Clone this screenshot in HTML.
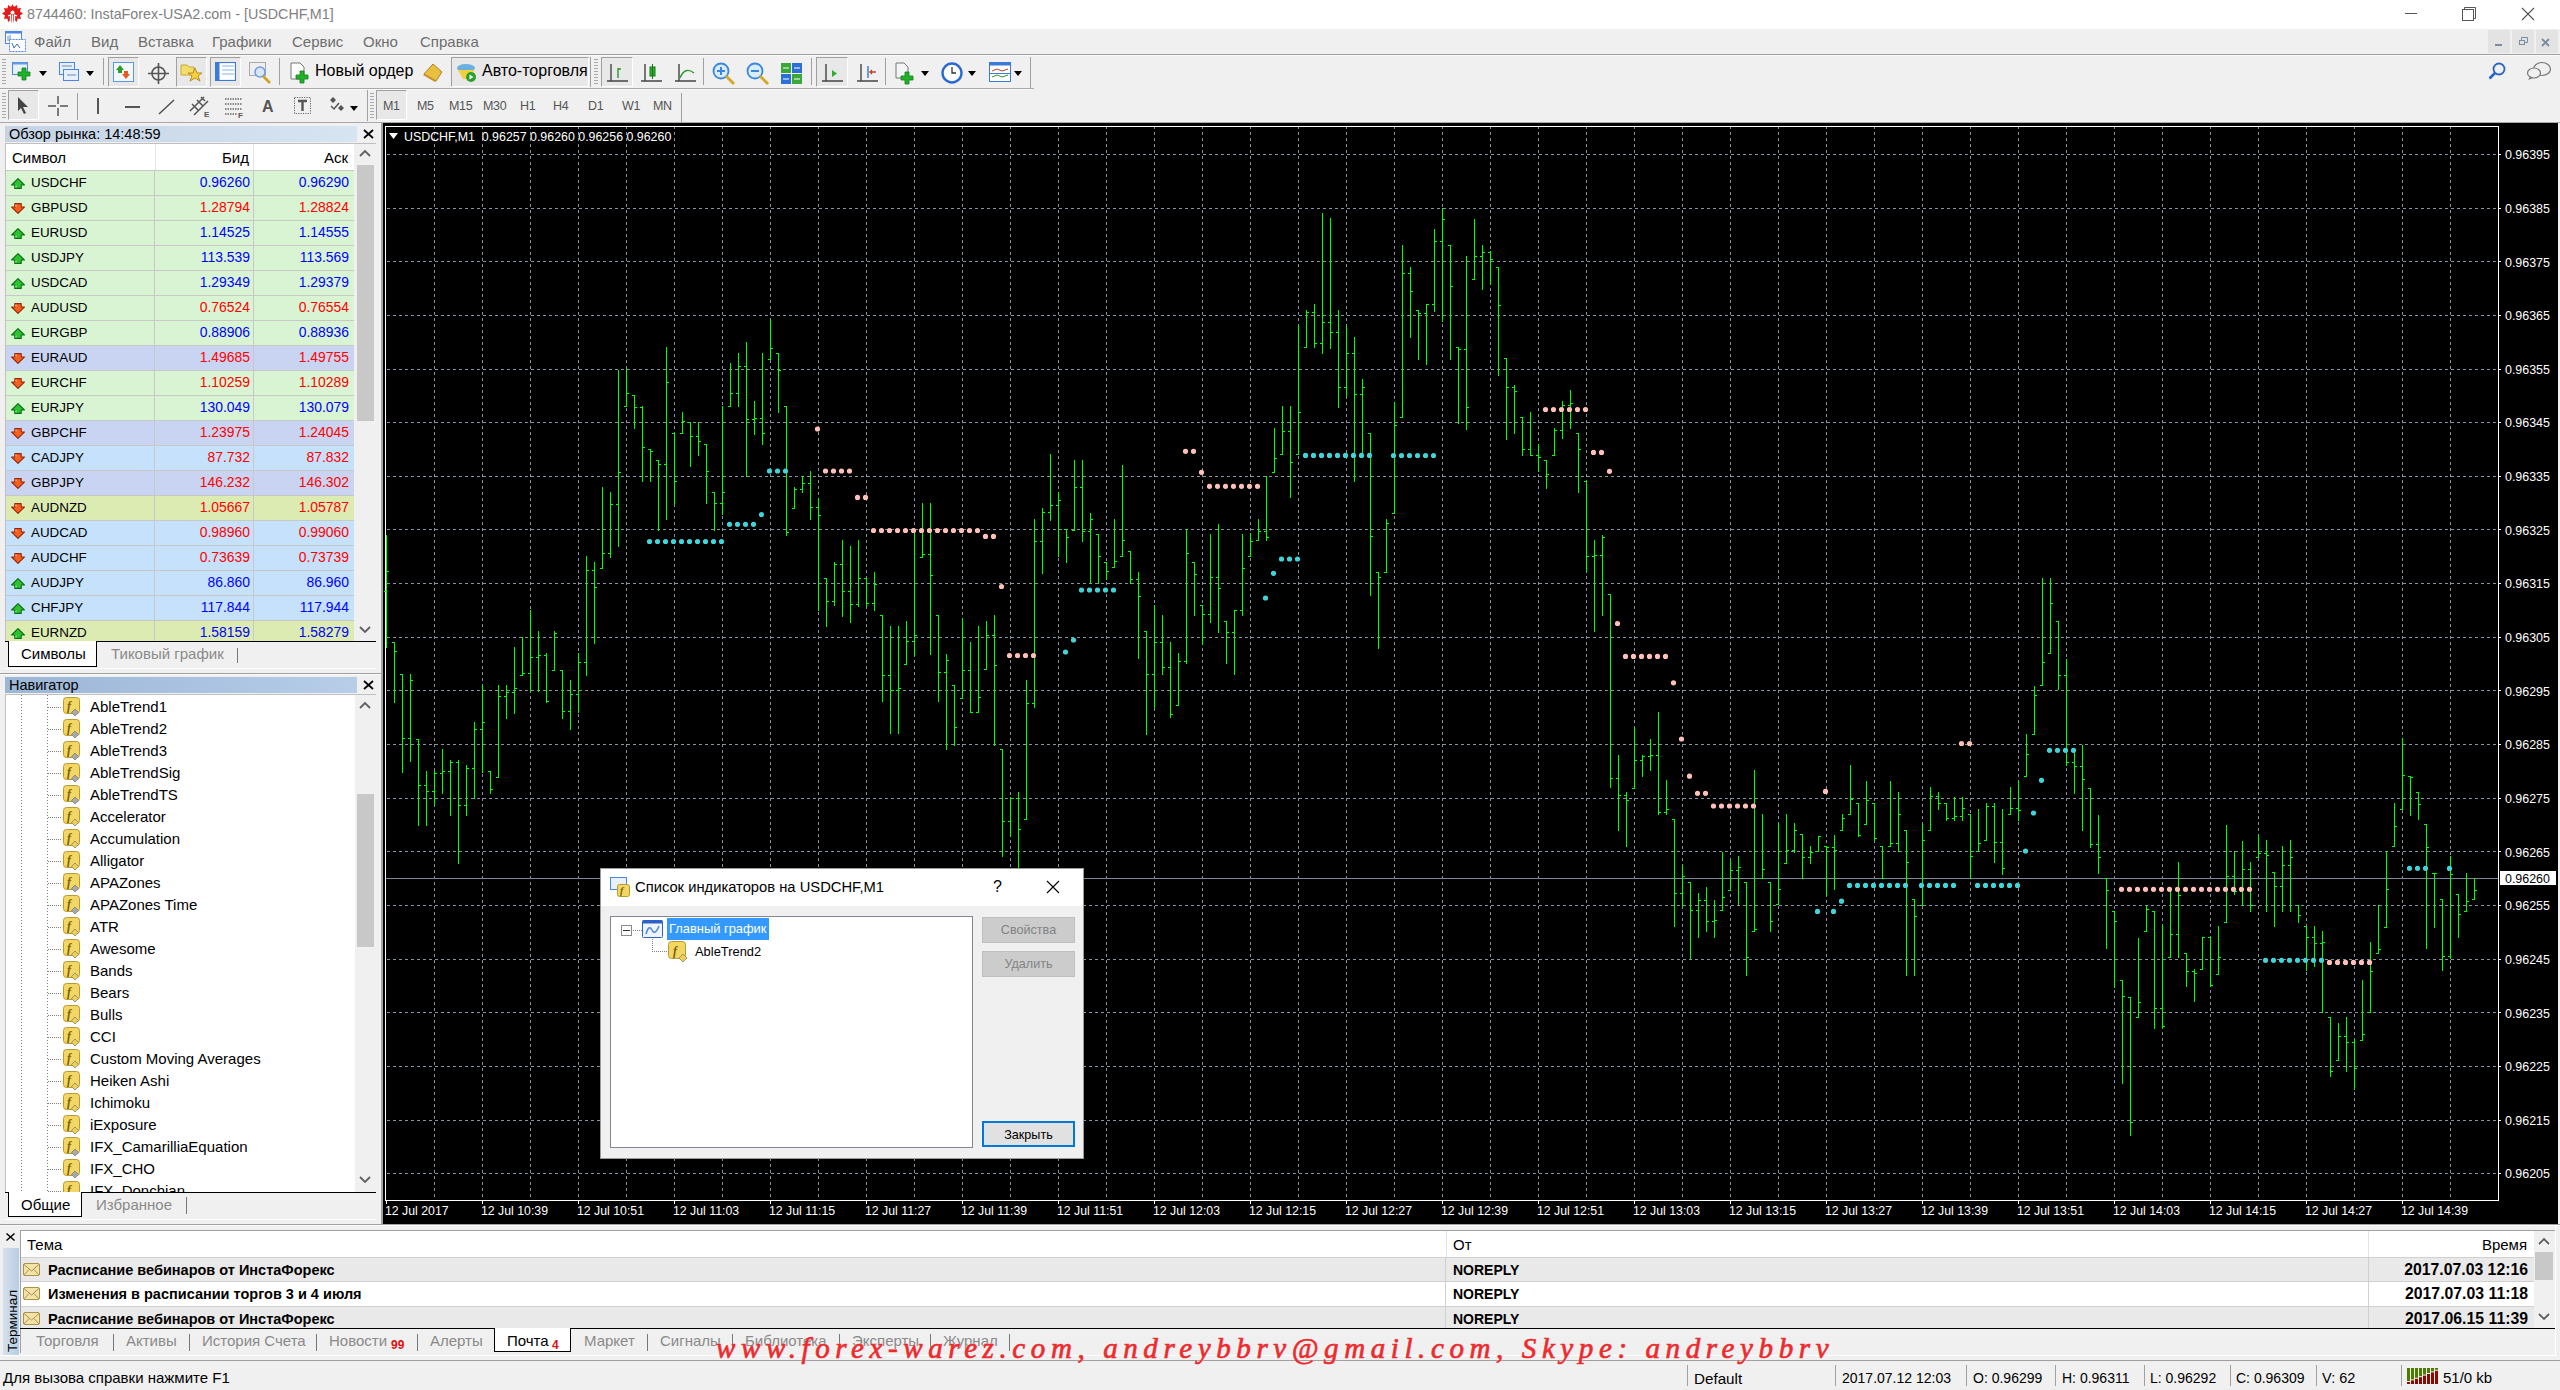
<!DOCTYPE html>
<html><head><meta charset="utf-8"><style>
html,body{margin:0;padding:0;width:2560px;height:1390px;overflow:hidden;background:#f0f0f0;font-family:"Liberation Sans", sans-serif;}
.t{position:absolute;white-space:nowrap;line-height:1;}
div{box-sizing:border-box;}
</style></head><body>
<div style="position:absolute;left:0px;top:0px;width:2560px;height:29px;background:#fff;"></div><svg style="position:absolute;left:2px;top:4px" width="21" height="21" viewBox="0 0 21 21">
<g fill="#e31b1b"><circle cx="10.5" cy="9.5" r="7"/>
<polygon points="10.5,0 12,3 15,1 15.5,4.5 19,4 18,7.5 21,9.5 18,11.5 19,15 15.5,14.5 15,18 12,16 10.5,21 9,16 6,18 5.5,14.5 2,15 3,11.5 0,9.5 3,7.5 2,4 5.5,4.5 6,1 9,3"/></g>
<circle cx="10.5" cy="8.5" r="2" fill="#fff"/><path d="M10.5 11 V21 M6 12 L8.5 11 V17 M15 12 L12.5 11 V17" stroke="#fff" stroke-width="1.3" fill="none"/>
</svg><div class="t" style="left:27px;top:7px;font-size:14.3px;color:#808080;">8744460: InstaForex-USA2.com - [USDCHF,M1]</div><div style="position:absolute;left:2405px;top:13px;width:12px;height:1px;background:#555;"></div><svg style="position:absolute;left:2462px;top:7px" width="14" height="14"><rect x="0.5" y="2.5" width="11" height="11" fill="none" stroke="#555"/><path d="M2.5 2.5 V0.5 H13.5 V11.5 H11.5" fill="none" stroke="#555"/></svg><svg style="position:absolute;left:2521px;top:7px" width="14" height="14"><path d="M1 1 L13 13 M13 1 L1 13" stroke="#555" stroke-width="1.1"/></svg><div style="position:absolute;left:0px;top:29px;width:2560px;height:25px;background:#f0f0f0;"></div><svg style="position:absolute;left:5px;top:31px" width="21" height="21" viewBox="0 0 21 21">
<rect x="0.5" y="0.5" width="16" height="12" fill="#fff" stroke="#4a86e8"/><rect x="0.5" y="0.5" width="16" height="2" fill="#4a86e8"/>
<rect x="4.5" y="8.5" width="16" height="12" fill="#fff" stroke="#4a86e8" stroke-dasharray="2,1"/>
<path d="M7 12 L9 17 L12 13 L15 17" stroke="#3a6ed8" fill="none"/><path d="M3 5 V10 M5 4 V8" stroke="#5a8ad8"/></svg><div class="t" style="left:34px;top:34px;font-size:15px;color:#6d6d6d;">Файл</div><div class="t" style="left:91px;top:34px;font-size:15px;color:#6d6d6d;">Вид</div><div class="t" style="left:138px;top:34px;font-size:15px;color:#6d6d6d;">Вставка</div><div class="t" style="left:212px;top:34px;font-size:15px;color:#6d6d6d;">Графики</div><div class="t" style="left:292px;top:34px;font-size:15px;color:#6d6d6d;">Сервис</div><div class="t" style="left:363px;top:34px;font-size:15px;color:#6d6d6d;">Окно</div><div class="t" style="left:420px;top:34px;font-size:15px;color:#6d6d6d;">Справка</div><div style="position:absolute;left:2488px;top:30px;width:22px;height:23px;background:#e3e3e3;"></div><div style="position:absolute;left:2512px;top:30px;width:22px;height:23px;background:#e3e3e3;"></div><div style="position:absolute;left:2536px;top:30px;width:22px;height:23px;background:#e3e3e3;"></div><div style="position:absolute;left:2495px;top:44px;width:7px;height:2px;background:#7b8ba0;"></div><svg style="position:absolute;left:2519px;top:37px" width="9" height="9"><rect x="0.5" y="3.5" width="5" height="4" fill="none" stroke="#7b8ba0"/><path d="M2.5 3 V0.5 H8.5 V5.5 H6" fill="none" stroke="#7b8ba0"/></svg><svg style="position:absolute;left:2541px;top:38px" width="9" height="9"><path d="M1 1 L8 8 M8 1 L1 8" stroke="#7b8ba0" stroke-width="1.8"/></svg><div style="position:absolute;left:0px;top:54px;width:2560px;height:1px;background:#a0a0a0;"></div><div style="position:absolute;left:0px;top:55px;width:2560px;height:1px;background:#fafafa;"></div><div style="position:absolute;left:0px;top:88px;width:1034px;height:1px;background:#a9a9a9;"></div><div style="position:absolute;left:0px;top:89px;width:1031px;height:1px;background:#fafafa;"></div><div style="position:absolute;left:0px;top:122px;width:2560px;height:1px;background:#a9a9a9;"></div><div style="position:absolute;left:2px;top:59px;width:4px;height:27px;background:repeating-linear-gradient(#a8a8a8 0 1px,#f0f0f0 1px 3px);"></div><svg style="position:absolute;left:12px;top:62px" width="22" height="20" viewBox="0 0 22 20"><rect x="0.5" y="0.5" width="15" height="12" fill="#e8f0fa" stroke="#4a86e8"/><rect x="0.5" y="0.5" width="15" height="2" fill="#6a9ae8"/><path d="M10 6 H14 V10 H18 V14 H14 V18 H10 V14 H6 V10 H10Z" fill="#22b02a" stroke="#108018" stroke-width="0.8"/></svg><svg style="position:absolute;left:39px;top:71px" width="8" height="5"><path d="M0 0 H8 L4 5 Z" fill="#000"/></svg><svg style="position:absolute;left:59px;top:62px" width="22" height="20" viewBox="0 0 22 20"><rect x="0.5" y="0.5" width="15" height="12" fill="#e8f0fa" stroke="#4a86e8"/><rect x="4.5" y="7.5" width="15" height="11" fill="#e8f0fa" stroke="#4a86e8"/><path d="M3 4 H13 M8 13 H17" stroke="#6a8ab8"/></svg><svg style="position:absolute;left:86px;top:71px" width="8" height="5"><path d="M0 0 H8 L4 5 Z" fill="#000"/></svg><div style="position:absolute;left:103px;top:58px;width:1px;height:27px;background:#a0a0a0;"></div><div style="position:absolute;left:108px;top:57px;width:31px;height:30px;border-top:1px solid #a0a0a0;border-left:1px solid #a0a0a0;border-right:1px solid #fff;border-bottom:1px solid #fff;background:#e8e8e8;"></div><svg style="position:absolute;left:113px;top:62px" width="21" height="20" viewBox="0 0 21 20"><rect x="0.5" y="0.5" width="20" height="19" fill="#f4f8fc" stroke="#5a96e8"/><path d="M7 3 L11 8 H9 V11 H5 V8 H3Z" fill="#2aa02a"/><path d="M13 17 L17 12 H15 V9 H11 V12 H9Z" fill="#e85a20"/></svg><svg style="position:absolute;left:148px;top:63px" width="21" height="21" viewBox="0 0 21 21"><circle cx="10.5" cy="10.5" r="6.5" fill="none" stroke="#555" stroke-width="1.6"/><path d="M10.5 0 V21 M0 10.5 H21" stroke="#555" stroke-width="1.6"/></svg><div style="position:absolute;left:176px;top:57px;width:31px;height:30px;border-top:1px solid #a0a0a0;border-left:1px solid #a0a0a0;border-right:1px solid #fff;border-bottom:1px solid #fff;background:#e8e8e8;"></div><svg style="position:absolute;left:180px;top:62px" width="24" height="20" viewBox="0 0 24 20"><path d="M1 3 H7 L9 5 H14 V13 H1Z" fill="#f4dc6a" stroke="#c8a838"/><path d="M15 6 L17 11 H22 L18 14 L20 19 L15 16 L10 19 L12 14 L8 11 H13Z" fill="#f4d040" stroke="#b89020"/></svg><div style="position:absolute;left:210px;top:57px;width:31px;height:30px;border-top:1px solid #a0a0a0;border-left:1px solid #a0a0a0;border-right:1px solid #fff;border-bottom:1px solid #fff;background:#e8e8e8;"></div><svg style="position:absolute;left:215px;top:62px" width="21" height="19" viewBox="0 0 21 19"><rect x="0.5" y="0.5" width="20" height="18" fill="#fff" stroke="#3a7ad8" stroke-width="1.2"/><rect x="0.5" y="0.5" width="4" height="18" fill="#3a7ad8"/><path d="M7 4 H19 M7 8 H19 M7 12 H19" stroke="#8ab0e8"/></svg><svg style="position:absolute;left:249px;top:62px" width="23" height="22" viewBox="0 0 23 22"><rect x="0.5" y="0.5" width="16" height="13" fill="#eee" stroke="#aaa"/><circle cx="11" cy="10" r="5" fill="#d8e8f8" stroke="#6a9ae8" stroke-width="1.5"/><path d="M14 14 L21 21" stroke="#d4a020" stroke-width="2.5"/></svg><div style="position:absolute;left:279px;top:58px;width:1px;height:27px;background:#a0a0a0;"></div><svg style="position:absolute;left:290px;top:62px" width="21" height="23" viewBox="0 0 21 23"><path d="M1 1 H10 L14 5 V17 H1Z" fill="#fff" stroke="#777"/><path d="M10 9 H14 V13 H18 V17 H14 V21 H10 V17 H6 V13 H10Z" fill="#22b02a" stroke="#108018" stroke-width="0.8"/></svg><div class="t" style="left:315px;top:63px;font-size:16px;color:#000;">Новый ордер</div><svg style="position:absolute;left:422px;top:62px" width="22" height="20" viewBox="0 0 22 20"><path d="M2 12 L11 2 L20 10 L14 19 Z" fill="#e8c040" stroke="#b08020"/><path d="M2 12 L14 19 L13 20 L1 13Z" fill="#c89028"/></svg><div style="position:absolute;left:451px;top:57px;width:138px;height:30px;border-top:1px solid #a0a0a0;border-left:1px solid #a0a0a0;border-right:1px solid #fff;border-bottom:1px solid #fff;background:#e8e8e8;"></div><svg style="position:absolute;left:455px;top:61px" width="22" height="22" viewBox="0 0 22 22"><ellipse cx="11" cy="7" rx="9" ry="4" fill="#6ab0e0"/><path d="M3 9 L8 18 H15 L19 9Z" fill="#f0d040"/><circle cx="16" cy="16" r="5" fill="#2aa02a"/><path d="M14.5 13.5 L18.5 16 L14.5 18.5Z" fill="#fff"/></svg><div class="t" style="left:482px;top:63px;font-size:16px;color:#000;">Авто-торговля</div><div style="position:absolute;left:590px;top:57px;width:1px;height:30px;background:#a0a0a0;"></div><div style="position:absolute;left:594px;top:59px;width:4px;height:27px;background:repeating-linear-gradient(#a8a8a8 0 1px,#f0f0f0 1px 3px);"></div><div style="position:absolute;left:601px;top:57px;width:32px;height:30px;border-top:1px solid #a0a0a0;border-left:1px solid #a0a0a0;border-right:1px solid #fff;border-bottom:1px solid #fff;background:#e8e8e8;"></div><svg style="position:absolute;left:607px;top:64px" width="22" height="19" viewBox="0 0 22 19"><path d="M4 0 V17 M0 17 H21" stroke="#444" stroke-width="1.4"/><path d="M11 14 V4 M11 5 H14" stroke="#2a9a2a" stroke-width="1.4"/></svg><svg style="position:absolute;left:641px;top:64px" width="22" height="19" viewBox="0 0 22 19"><path d="M4 0 V17 M0 17 H21" stroke="#444" stroke-width="1.4"/><rect x="9" y="3" width="5" height="9" fill="#2ab02a" stroke="#187818"/><path d="M11.5 0 V15" stroke="#187818"/></svg><svg style="position:absolute;left:675px;top:64px" width="22" height="19" viewBox="0 0 22 19"><path d="M4 0 V17 M0 17 H21" stroke="#444" stroke-width="1.4"/><path d="M5 14 Q10 2 19 9" stroke="#2a9a2a" fill="none" stroke-width="1.4"/></svg><div style="position:absolute;left:703px;top:58px;width:1px;height:27px;background:#a0a0a0;"></div><svg style="position:absolute;left:712px;top:62px" width="24" height="24" viewBox="0 0 24 24"><circle cx="9" cy="9" r="7.5" fill="#d8ecfc" stroke="#3a86e0" stroke-width="1.8"/><path d="M5 9 H13 M9 5 V13" stroke="#3a86e0" stroke-width="2"/><path d="M14 14 L22 22" stroke="#d4a828" stroke-width="3"/></svg><svg style="position:absolute;left:746px;top:62px" width="24" height="24" viewBox="0 0 24 24"><circle cx="9" cy="9" r="7.5" fill="#d8ecfc" stroke="#3a86e0" stroke-width="1.8"/><path d="M5 9 H13" stroke="#3a86e0" stroke-width="2"/><path d="M14 14 L22 22" stroke="#d4a828" stroke-width="3"/></svg><svg style="position:absolute;left:781px;top:63px" width="22" height="21" viewBox="0 0 22 21"><rect x="0" y="0" width="10" height="10" fill="#38a838"/><rect x="11" y="0" width="10" height="10" fill="#2a70d8"/><rect x="0" y="11" width="10" height="10" fill="#2a70d8"/><rect x="11" y="11" width="10" height="10" fill="#38a838"/><path d="M2 5 H8 M13 5 H19 M2 16 H8 M13 16 H19" stroke="#fff"/></svg><div style="position:absolute;left:811px;top:58px;width:1px;height:27px;background:#a0a0a0;"></div><div style="position:absolute;left:816px;top:57px;width:32px;height:30px;border-top:1px solid #a0a0a0;border-left:1px solid #a0a0a0;border-right:1px solid #fff;border-bottom:1px solid #fff;background:#e8e8e8;"></div><svg style="position:absolute;left:822px;top:64px" width="22" height="19" viewBox="0 0 22 19"><path d="M4 0 V17 M0 17 H21" stroke="#444" stroke-width="1.4"/><path d="M10 6 V13 L15 9.5Z" fill="#2ab02a"/></svg><svg style="position:absolute;left:857px;top:64px" width="22" height="19" viewBox="0 0 22 19"><path d="M4 0 V17 M0 17 H21" stroke="#444" stroke-width="1.4"/><path d="M11 2 V14" stroke="#2a7ad8" stroke-width="1.4"/><path d="M19 8 H13 M15 6 L13 8 L15 10" stroke="#d04020" stroke-width="1.4" fill="none"/></svg><div style="position:absolute;left:885px;top:58px;width:1px;height:27px;background:#a0a0a0;"></div><svg style="position:absolute;left:895px;top:62px" width="24" height="23" viewBox="0 0 24 23"><path d="M1 1 H9 L13 5 V16 H1Z" fill="#f4f4f4" stroke="#777"/><path d="M10 10 H14 V14 H18 V18 H14 V22 H10 V18 H6 V14 H10Z" fill="#22b02a" stroke="#108018" stroke-width="0.8"/></svg><svg style="position:absolute;left:921px;top:71px" width="8" height="5"><path d="M0 0 H8 L4 5 Z" fill="#000"/></svg><svg style="position:absolute;left:941px;top:62px" width="22" height="22" viewBox="0 0 22 22"><circle cx="11" cy="11" r="9.5" fill="#fff" stroke="#2a6ad0" stroke-width="2.4"/><path d="M11 5 V11 H15" stroke="#333" stroke-width="1.3" fill="none"/></svg><svg style="position:absolute;left:968px;top:71px" width="8" height="5"><path d="M0 0 H8 L4 5 Z" fill="#000"/></svg><svg style="position:absolute;left:989px;top:62px" width="22" height="20" viewBox="0 0 22 20"><rect x="0.5" y="0.5" width="21" height="19" fill="#fff" stroke="#3a7ad8"/><rect x="0.5" y="0.5" width="21" height="3" fill="#3a7ad8"/><path d="M3 9 L8 7 L13 9 L19 7" stroke="#c04020" fill="none"/><path d="M3 15 L8 13 L13 15 L19 13" stroke="#2a9a2a" fill="none"/><path d="M0 11.5 H22" stroke="#3a7ad8"/></svg><svg style="position:absolute;left:1014px;top:71px" width="8" height="5"><path d="M0 0 H8 L4 5 Z" fill="#000"/></svg><div style="position:absolute;left:1030px;top:57px;width:1px;height:31px;background:#a0a0a0;"></div><svg style="position:absolute;left:2488px;top:62px" width="18" height="18" viewBox="0 0 18 18"><circle cx="11" cy="7" r="5.5" fill="none" stroke="#2a62c8" stroke-width="1.8"/><path d="M7 11 L1.5 16.5" stroke="#2a62c8" stroke-width="2.6"/></svg><svg style="position:absolute;left:2524px;top:61px" width="28" height="20" viewBox="0 0 28 20"><ellipse cx="18" cy="8" rx="8.5" ry="6.5" fill="#f0f0f0" stroke="#777" stroke-width="1.2"/><ellipse cx="10" cy="12" rx="6.5" ry="5" fill="#f0f0f0" stroke="#777" stroke-width="1.2"/><path d="M6 16 L4 19 L9 17" fill="#777"/></svg><div style="position:absolute;left:2px;top:93px;width:4px;height:27px;background:repeating-linear-gradient(#a8a8a8 0 1px,#f0f0f0 1px 3px);"></div><div style="position:absolute;left:8px;top:90px;width:31px;height:30px;border-top:1px solid #a0a0a0;border-left:1px solid #a0a0a0;border-right:1px solid #fff;border-bottom:1px solid #fff;background:#e8e8e8;"></div><svg style="position:absolute;left:17px;top:97px" width="12" height="18" viewBox="0 0 12 18"><path d="M1 0 V14 L4 11 L7 17 L9 16 L6 10 H11Z" fill="#444"/></svg><svg style="position:absolute;left:48px;top:96px" width="20" height="20" viewBox="0 0 20 20"><path d="M10 0 V8 M10 12 V20 M0 10 H8 M12 10 H20" stroke="#555" stroke-width="1.5"/></svg><div style="position:absolute;left:77px;top:93px;width:1px;height:27px;background:#a0a0a0;"></div><div style="position:absolute;left:97px;top:98px;width:2px;height:16px;background:#555;"></div><div style="position:absolute;left:125px;top:106px;width:15px;height:2px;background:#555;"></div><svg style="position:absolute;left:158px;top:99px" width="17" height="16" viewBox="0 0 17 16"><path d="M1 15 L16 1" stroke="#555" stroke-width="1.6"/></svg><svg style="position:absolute;left:189px;top:96px" width="22" height="22" viewBox="0 0 22 22"><path d="M1 15 L15 1 M5 19 L19 5 M3 8 L9 14 M8 4 L14 10 M12 1 L16 5" stroke="#555" stroke-width="1.5"/><text x="15" y="21" font-size="8" font-weight="bold" fill="#555" font-family="Liberation Sans">E</text></svg><svg style="position:absolute;left:225px;top:97px" width="20" height="21" viewBox="0 0 20 21"><path d="M0 2 H17 M0 7 H17 M0 12 H17 M0 17 H12" stroke="#666" stroke-width="1.5" stroke-dasharray="1.5,1"/><text x="13" y="21" font-size="8" font-weight="bold" fill="#555" font-family="Liberation Sans">F</text></svg><div class="t" style="left:262px;top:99px;font-size:16px;font-weight:bold;color:#555;">A</div><svg style="position:absolute;left:294px;top:97px" width="17" height="17" viewBox="0 0 17 17"><rect x="0.5" y="0.5" width="16" height="16" fill="none" stroke="#666" stroke-dasharray="1.2,1.2"/><path d="M4 4 H13 M8.5 4 V14" stroke="#555" stroke-width="2.4"/></svg><svg style="position:absolute;left:327px;top:97px" width="20" height="17" viewBox="0 0 20 17"><path d="M3 3 L6 0 L9 3 L6 6Z M11 11 L14 8 L17 11 L14 14Z" fill="#555"/><path d="M4 9 L7 12 L12 6" stroke="#555" stroke-width="1.5" fill="none"/></svg><svg style="position:absolute;left:350px;top:106px" width="8" height="5"><path d="M0 0 H8 L4 5 Z" fill="#000"/></svg><div style="position:absolute;left:367px;top:90px;width:1px;height:31px;background:#a0a0a0;"></div><div style="position:absolute;left:370px;top:93px;width:4px;height:27px;background:repeating-linear-gradient(#a8a8a8 0 1px,#f0f0f0 1px 3px);"></div><div style="position:absolute;left:376px;top:90px;width:31px;height:30px;border-top:1px solid #a0a0a0;border-left:1px solid #a0a0a0;border-right:1px solid #fff;border-bottom:1px solid #fff;background:#e8e8e8;"></div><div class="t" style="left:383px;top:100px;font-size:12.5px;color:#555;letter-spacing:-0.3px;">M1</div><div class="t" style="left:417px;top:100px;font-size:12.5px;color:#555;letter-spacing:-0.3px;">M5</div><div class="t" style="left:449px;top:100px;font-size:12.5px;color:#555;letter-spacing:-0.3px;">M15</div><div class="t" style="left:483px;top:100px;font-size:12.5px;color:#555;letter-spacing:-0.3px;">M30</div><div class="t" style="left:520px;top:100px;font-size:12.5px;color:#555;letter-spacing:-0.3px;">H1</div><div class="t" style="left:553px;top:100px;font-size:12.5px;color:#555;letter-spacing:-0.3px;">H4</div><div class="t" style="left:588px;top:100px;font-size:12.5px;color:#555;letter-spacing:-0.3px;">D1</div><div class="t" style="left:622px;top:100px;font-size:12.5px;color:#555;letter-spacing:-0.3px;">W1</div><div class="t" style="left:653px;top:100px;font-size:12.5px;color:#555;letter-spacing:-0.3px;">MN</div><div style="position:absolute;left:681px;top:93px;width:1px;height:29px;background:#a0a0a0;"></div><div style="position:absolute;left:0px;top:123px;width:383px;height:1101px;background:#f0f0f0;"></div><div style="position:absolute;left:381px;top:123px;width:2px;height:1101px;background:#a0a0a0;"></div><div style="position:absolute;left:5px;top:126px;width:352px;height:16px;background:linear-gradient(90deg,#c5d3e5,#d7e4f2);"></div><div class="t" style="left:9px;top:127px;font-size:14.5px;color:#000;">Обзор рынка: 14:48:59</div><svg style="position:absolute;left:363px;top:129px" width="11" height="10"><path d="M1 1 L10 9 M10 1 L1 9" stroke="#000" stroke-width="1.7"/></svg><div style="position:absolute;left:5px;top:143px;width:371px;height:498px;background:#fff;border-top:1px solid #c0c0c0;border-left:1px solid #c0c0c0;"></div><div style="position:absolute;left:155px;top:144px;width:1px;height:26px;background:#e4e4e4;"></div><div style="position:absolute;left:253px;top:144px;width:1px;height:26px;background:#e4e4e4;"></div><div class="t" style="left:12px;top:150px;font-size:15px;color:#000;">Символ</div><div class="t" style="left:195px;top:150px;font-size:15px;color:#000;width:54px;text-align:right;">Бид</div><div class="t" style="left:294px;top:150px;font-size:15px;color:#000;width:54px;text-align:right;">Аск</div><div style="position:absolute;left:6px;top:170px;width:348px;height:25px;background:#d8f4d3;border-top:1px solid #c8c8c8;"></div><div style="position:absolute;left:154px;top:170px;width:1px;height:25px;background:#c8c8c8;"></div><div style="position:absolute;left:253px;top:170px;width:1px;height:25px;background:#c8c8c8;"></div><svg style="position:absolute;left:11px;top:178px" width="14" height="11"><path d="M7 0.6 L13.4 7 H10.2 V10.4 H3.8 V7 H0.6Z" fill="#2cc232" stroke="#0b6e10" stroke-width="1.1" stroke-linejoin="round"/><path d="M5 7.5 V9.5" stroke="#8af08a" stroke-width="1.2"/></svg><div class="t" style="left:31px;top:175px;font-size:13.4px;color:#000;top:176px;">USDCHF</div><div class="t" style="left:170px;top:175px;font-size:13.9px;color:#0000ff;width:80px;text-align:right;top:176px;">0.96260</div><div class="t" style="left:269px;top:175px;font-size:13.9px;color:#0000ff;width:80px;text-align:right;top:176px;">0.96290</div><div style="position:absolute;left:6px;top:195px;width:348px;height:25px;background:#d8f4d3;border-top:1px solid #c8c8c8;"></div><div style="position:absolute;left:154px;top:195px;width:1px;height:25px;background:#c8c8c8;"></div><div style="position:absolute;left:253px;top:195px;width:1px;height:25px;background:#c8c8c8;"></div><svg style="position:absolute;left:11px;top:203px" width="14" height="11"><path d="M7 10.4 L13.4 4 H10.2 V0.6 H3.8 V4 H0.6Z" fill="#f5601e" stroke="#9a2808" stroke-width="1.1" stroke-linejoin="round"/><path d="M5 1.5 V3.5" stroke="#ffb090" stroke-width="1.2"/></svg><div class="t" style="left:31px;top:200px;font-size:13.4px;color:#000;top:201px;">GBPUSD</div><div class="t" style="left:170px;top:200px;font-size:13.9px;color:#ff0000;width:80px;text-align:right;top:201px;">1.28794</div><div class="t" style="left:269px;top:200px;font-size:13.9px;color:#ff0000;width:80px;text-align:right;top:201px;">1.28824</div><div style="position:absolute;left:6px;top:220px;width:348px;height:25px;background:#d8f4d3;border-top:1px solid #c8c8c8;"></div><div style="position:absolute;left:154px;top:220px;width:1px;height:25px;background:#c8c8c8;"></div><div style="position:absolute;left:253px;top:220px;width:1px;height:25px;background:#c8c8c8;"></div><svg style="position:absolute;left:11px;top:228px" width="14" height="11"><path d="M7 0.6 L13.4 7 H10.2 V10.4 H3.8 V7 H0.6Z" fill="#2cc232" stroke="#0b6e10" stroke-width="1.1" stroke-linejoin="round"/><path d="M5 7.5 V9.5" stroke="#8af08a" stroke-width="1.2"/></svg><div class="t" style="left:31px;top:225px;font-size:13.4px;color:#000;top:226px;">EURUSD</div><div class="t" style="left:170px;top:225px;font-size:13.9px;color:#0000ff;width:80px;text-align:right;top:226px;">1.14525</div><div class="t" style="left:269px;top:225px;font-size:13.9px;color:#0000ff;width:80px;text-align:right;top:226px;">1.14555</div><div style="position:absolute;left:6px;top:245px;width:348px;height:25px;background:#d8f4d3;border-top:1px solid #c8c8c8;"></div><div style="position:absolute;left:154px;top:245px;width:1px;height:25px;background:#c8c8c8;"></div><div style="position:absolute;left:253px;top:245px;width:1px;height:25px;background:#c8c8c8;"></div><svg style="position:absolute;left:11px;top:253px" width="14" height="11"><path d="M7 0.6 L13.4 7 H10.2 V10.4 H3.8 V7 H0.6Z" fill="#2cc232" stroke="#0b6e10" stroke-width="1.1" stroke-linejoin="round"/><path d="M5 7.5 V9.5" stroke="#8af08a" stroke-width="1.2"/></svg><div class="t" style="left:31px;top:250px;font-size:13.4px;color:#000;top:251px;">USDJPY</div><div class="t" style="left:170px;top:250px;font-size:13.9px;color:#0000ff;width:80px;text-align:right;top:251px;">113.539</div><div class="t" style="left:269px;top:250px;font-size:13.9px;color:#0000ff;width:80px;text-align:right;top:251px;">113.569</div><div style="position:absolute;left:6px;top:270px;width:348px;height:25px;background:#d8f4d3;border-top:1px solid #c8c8c8;"></div><div style="position:absolute;left:154px;top:270px;width:1px;height:25px;background:#c8c8c8;"></div><div style="position:absolute;left:253px;top:270px;width:1px;height:25px;background:#c8c8c8;"></div><svg style="position:absolute;left:11px;top:278px" width="14" height="11"><path d="M7 0.6 L13.4 7 H10.2 V10.4 H3.8 V7 H0.6Z" fill="#2cc232" stroke="#0b6e10" stroke-width="1.1" stroke-linejoin="round"/><path d="M5 7.5 V9.5" stroke="#8af08a" stroke-width="1.2"/></svg><div class="t" style="left:31px;top:275px;font-size:13.4px;color:#000;top:276px;">USDCAD</div><div class="t" style="left:170px;top:275px;font-size:13.9px;color:#0000ff;width:80px;text-align:right;top:276px;">1.29349</div><div class="t" style="left:269px;top:275px;font-size:13.9px;color:#0000ff;width:80px;text-align:right;top:276px;">1.29379</div><div style="position:absolute;left:6px;top:295px;width:348px;height:25px;background:#d8f4d3;border-top:1px solid #c8c8c8;"></div><div style="position:absolute;left:154px;top:295px;width:1px;height:25px;background:#c8c8c8;"></div><div style="position:absolute;left:253px;top:295px;width:1px;height:25px;background:#c8c8c8;"></div><svg style="position:absolute;left:11px;top:303px" width="14" height="11"><path d="M7 10.4 L13.4 4 H10.2 V0.6 H3.8 V4 H0.6Z" fill="#f5601e" stroke="#9a2808" stroke-width="1.1" stroke-linejoin="round"/><path d="M5 1.5 V3.5" stroke="#ffb090" stroke-width="1.2"/></svg><div class="t" style="left:31px;top:300px;font-size:13.4px;color:#000;top:301px;">AUDUSD</div><div class="t" style="left:170px;top:300px;font-size:13.9px;color:#ff0000;width:80px;text-align:right;top:301px;">0.76524</div><div class="t" style="left:269px;top:300px;font-size:13.9px;color:#ff0000;width:80px;text-align:right;top:301px;">0.76554</div><div style="position:absolute;left:6px;top:320px;width:348px;height:25px;background:#d8f4d3;border-top:1px solid #c8c8c8;"></div><div style="position:absolute;left:154px;top:320px;width:1px;height:25px;background:#c8c8c8;"></div><div style="position:absolute;left:253px;top:320px;width:1px;height:25px;background:#c8c8c8;"></div><svg style="position:absolute;left:11px;top:328px" width="14" height="11"><path d="M7 0.6 L13.4 7 H10.2 V10.4 H3.8 V7 H0.6Z" fill="#2cc232" stroke="#0b6e10" stroke-width="1.1" stroke-linejoin="round"/><path d="M5 7.5 V9.5" stroke="#8af08a" stroke-width="1.2"/></svg><div class="t" style="left:31px;top:325px;font-size:13.4px;color:#000;top:326px;">EURGBP</div><div class="t" style="left:170px;top:325px;font-size:13.9px;color:#0000ff;width:80px;text-align:right;top:326px;">0.88906</div><div class="t" style="left:269px;top:325px;font-size:13.9px;color:#0000ff;width:80px;text-align:right;top:326px;">0.88936</div><div style="position:absolute;left:6px;top:345px;width:348px;height:25px;background:#c9d4f3;border-top:1px solid #c8c8c8;"></div><div style="position:absolute;left:154px;top:345px;width:1px;height:25px;background:#c8c8c8;"></div><div style="position:absolute;left:253px;top:345px;width:1px;height:25px;background:#c8c8c8;"></div><svg style="position:absolute;left:11px;top:353px" width="14" height="11"><path d="M7 10.4 L13.4 4 H10.2 V0.6 H3.8 V4 H0.6Z" fill="#f5601e" stroke="#9a2808" stroke-width="1.1" stroke-linejoin="round"/><path d="M5 1.5 V3.5" stroke="#ffb090" stroke-width="1.2"/></svg><div class="t" style="left:31px;top:350px;font-size:13.4px;color:#000;top:351px;">EURAUD</div><div class="t" style="left:170px;top:350px;font-size:13.9px;color:#ff0000;width:80px;text-align:right;top:351px;">1.49685</div><div class="t" style="left:269px;top:350px;font-size:13.9px;color:#ff0000;width:80px;text-align:right;top:351px;">1.49755</div><div style="position:absolute;left:6px;top:370px;width:348px;height:25px;background:#d8f4d3;border-top:1px solid #c8c8c8;"></div><div style="position:absolute;left:154px;top:370px;width:1px;height:25px;background:#c8c8c8;"></div><div style="position:absolute;left:253px;top:370px;width:1px;height:25px;background:#c8c8c8;"></div><svg style="position:absolute;left:11px;top:378px" width="14" height="11"><path d="M7 10.4 L13.4 4 H10.2 V0.6 H3.8 V4 H0.6Z" fill="#f5601e" stroke="#9a2808" stroke-width="1.1" stroke-linejoin="round"/><path d="M5 1.5 V3.5" stroke="#ffb090" stroke-width="1.2"/></svg><div class="t" style="left:31px;top:375px;font-size:13.4px;color:#000;top:376px;">EURCHF</div><div class="t" style="left:170px;top:375px;font-size:13.9px;color:#ff0000;width:80px;text-align:right;top:376px;">1.10259</div><div class="t" style="left:269px;top:375px;font-size:13.9px;color:#ff0000;width:80px;text-align:right;top:376px;">1.10289</div><div style="position:absolute;left:6px;top:395px;width:348px;height:25px;background:#d8f4d3;border-top:1px solid #c8c8c8;"></div><div style="position:absolute;left:154px;top:395px;width:1px;height:25px;background:#c8c8c8;"></div><div style="position:absolute;left:253px;top:395px;width:1px;height:25px;background:#c8c8c8;"></div><svg style="position:absolute;left:11px;top:403px" width="14" height="11"><path d="M7 0.6 L13.4 7 H10.2 V10.4 H3.8 V7 H0.6Z" fill="#2cc232" stroke="#0b6e10" stroke-width="1.1" stroke-linejoin="round"/><path d="M5 7.5 V9.5" stroke="#8af08a" stroke-width="1.2"/></svg><div class="t" style="left:31px;top:400px;font-size:13.4px;color:#000;top:401px;">EURJPY</div><div class="t" style="left:170px;top:400px;font-size:13.9px;color:#0000ff;width:80px;text-align:right;top:401px;">130.049</div><div class="t" style="left:269px;top:400px;font-size:13.9px;color:#0000ff;width:80px;text-align:right;top:401px;">130.079</div><div style="position:absolute;left:6px;top:420px;width:348px;height:25px;background:#c9d4f3;border-top:1px solid #c8c8c8;"></div><div style="position:absolute;left:154px;top:420px;width:1px;height:25px;background:#c8c8c8;"></div><div style="position:absolute;left:253px;top:420px;width:1px;height:25px;background:#c8c8c8;"></div><svg style="position:absolute;left:11px;top:428px" width="14" height="11"><path d="M7 10.4 L13.4 4 H10.2 V0.6 H3.8 V4 H0.6Z" fill="#f5601e" stroke="#9a2808" stroke-width="1.1" stroke-linejoin="round"/><path d="M5 1.5 V3.5" stroke="#ffb090" stroke-width="1.2"/></svg><div class="t" style="left:31px;top:425px;font-size:13.4px;color:#000;top:426px;">GBPCHF</div><div class="t" style="left:170px;top:425px;font-size:13.9px;color:#ff0000;width:80px;text-align:right;top:426px;">1.23975</div><div class="t" style="left:269px;top:425px;font-size:13.9px;color:#ff0000;width:80px;text-align:right;top:426px;">1.24045</div><div style="position:absolute;left:6px;top:445px;width:348px;height:25px;background:#c5e1fb;border-top:1px solid #c8c8c8;"></div><div style="position:absolute;left:154px;top:445px;width:1px;height:25px;background:#c8c8c8;"></div><div style="position:absolute;left:253px;top:445px;width:1px;height:25px;background:#c8c8c8;"></div><svg style="position:absolute;left:11px;top:453px" width="14" height="11"><path d="M7 10.4 L13.4 4 H10.2 V0.6 H3.8 V4 H0.6Z" fill="#f5601e" stroke="#9a2808" stroke-width="1.1" stroke-linejoin="round"/><path d="M5 1.5 V3.5" stroke="#ffb090" stroke-width="1.2"/></svg><div class="t" style="left:31px;top:450px;font-size:13.4px;color:#000;top:451px;">CADJPY</div><div class="t" style="left:170px;top:450px;font-size:13.9px;color:#ff0000;width:80px;text-align:right;top:451px;">87.732</div><div class="t" style="left:269px;top:450px;font-size:13.9px;color:#ff0000;width:80px;text-align:right;top:451px;">87.832</div><div style="position:absolute;left:6px;top:470px;width:348px;height:25px;background:#c9d4f3;border-top:1px solid #c8c8c8;"></div><div style="position:absolute;left:154px;top:470px;width:1px;height:25px;background:#c8c8c8;"></div><div style="position:absolute;left:253px;top:470px;width:1px;height:25px;background:#c8c8c8;"></div><svg style="position:absolute;left:11px;top:478px" width="14" height="11"><path d="M7 10.4 L13.4 4 H10.2 V0.6 H3.8 V4 H0.6Z" fill="#f5601e" stroke="#9a2808" stroke-width="1.1" stroke-linejoin="round"/><path d="M5 1.5 V3.5" stroke="#ffb090" stroke-width="1.2"/></svg><div class="t" style="left:31px;top:475px;font-size:13.4px;color:#000;top:476px;">GBPJPY</div><div class="t" style="left:170px;top:475px;font-size:13.9px;color:#ff0000;width:80px;text-align:right;top:476px;">146.232</div><div class="t" style="left:269px;top:475px;font-size:13.9px;color:#ff0000;width:80px;text-align:right;top:476px;">146.302</div><div style="position:absolute;left:6px;top:495px;width:348px;height:25px;background:#dbebb2;border-top:1px solid #c8c8c8;"></div><div style="position:absolute;left:154px;top:495px;width:1px;height:25px;background:#c8c8c8;"></div><div style="position:absolute;left:253px;top:495px;width:1px;height:25px;background:#c8c8c8;"></div><svg style="position:absolute;left:11px;top:503px" width="14" height="11"><path d="M7 10.4 L13.4 4 H10.2 V0.6 H3.8 V4 H0.6Z" fill="#f5601e" stroke="#9a2808" stroke-width="1.1" stroke-linejoin="round"/><path d="M5 1.5 V3.5" stroke="#ffb090" stroke-width="1.2"/></svg><div class="t" style="left:31px;top:500px;font-size:13.4px;color:#000;top:501px;">AUDNZD</div><div class="t" style="left:170px;top:500px;font-size:13.9px;color:#ff0000;width:80px;text-align:right;top:501px;">1.05667</div><div class="t" style="left:269px;top:500px;font-size:13.9px;color:#ff0000;width:80px;text-align:right;top:501px;">1.05787</div><div style="position:absolute;left:6px;top:520px;width:348px;height:25px;background:#c5e1fb;border-top:1px solid #c8c8c8;"></div><div style="position:absolute;left:154px;top:520px;width:1px;height:25px;background:#c8c8c8;"></div><div style="position:absolute;left:253px;top:520px;width:1px;height:25px;background:#c8c8c8;"></div><svg style="position:absolute;left:11px;top:528px" width="14" height="11"><path d="M7 10.4 L13.4 4 H10.2 V0.6 H3.8 V4 H0.6Z" fill="#f5601e" stroke="#9a2808" stroke-width="1.1" stroke-linejoin="round"/><path d="M5 1.5 V3.5" stroke="#ffb090" stroke-width="1.2"/></svg><div class="t" style="left:31px;top:525px;font-size:13.4px;color:#000;top:526px;">AUDCAD</div><div class="t" style="left:170px;top:525px;font-size:13.9px;color:#ff0000;width:80px;text-align:right;top:526px;">0.98960</div><div class="t" style="left:269px;top:525px;font-size:13.9px;color:#ff0000;width:80px;text-align:right;top:526px;">0.99060</div><div style="position:absolute;left:6px;top:545px;width:348px;height:25px;background:#c5e1fb;border-top:1px solid #c8c8c8;"></div><div style="position:absolute;left:154px;top:545px;width:1px;height:25px;background:#c8c8c8;"></div><div style="position:absolute;left:253px;top:545px;width:1px;height:25px;background:#c8c8c8;"></div><svg style="position:absolute;left:11px;top:553px" width="14" height="11"><path d="M7 10.4 L13.4 4 H10.2 V0.6 H3.8 V4 H0.6Z" fill="#f5601e" stroke="#9a2808" stroke-width="1.1" stroke-linejoin="round"/><path d="M5 1.5 V3.5" stroke="#ffb090" stroke-width="1.2"/></svg><div class="t" style="left:31px;top:550px;font-size:13.4px;color:#000;top:551px;">AUDCHF</div><div class="t" style="left:170px;top:550px;font-size:13.9px;color:#ff0000;width:80px;text-align:right;top:551px;">0.73639</div><div class="t" style="left:269px;top:550px;font-size:13.9px;color:#ff0000;width:80px;text-align:right;top:551px;">0.73739</div><div style="position:absolute;left:6px;top:570px;width:348px;height:25px;background:#c5e1fb;border-top:1px solid #c8c8c8;"></div><div style="position:absolute;left:154px;top:570px;width:1px;height:25px;background:#c8c8c8;"></div><div style="position:absolute;left:253px;top:570px;width:1px;height:25px;background:#c8c8c8;"></div><svg style="position:absolute;left:11px;top:578px" width="14" height="11"><path d="M7 0.6 L13.4 7 H10.2 V10.4 H3.8 V7 H0.6Z" fill="#2cc232" stroke="#0b6e10" stroke-width="1.1" stroke-linejoin="round"/><path d="M5 7.5 V9.5" stroke="#8af08a" stroke-width="1.2"/></svg><div class="t" style="left:31px;top:575px;font-size:13.4px;color:#000;top:576px;">AUDJPY</div><div class="t" style="left:170px;top:575px;font-size:13.9px;color:#0000ff;width:80px;text-align:right;top:576px;">86.860</div><div class="t" style="left:269px;top:575px;font-size:13.9px;color:#0000ff;width:80px;text-align:right;top:576px;">86.960</div><div style="position:absolute;left:6px;top:595px;width:348px;height:25px;background:#c5e1fb;border-top:1px solid #c8c8c8;"></div><div style="position:absolute;left:154px;top:595px;width:1px;height:25px;background:#c8c8c8;"></div><div style="position:absolute;left:253px;top:595px;width:1px;height:25px;background:#c8c8c8;"></div><svg style="position:absolute;left:11px;top:603px" width="14" height="11"><path d="M7 0.6 L13.4 7 H10.2 V10.4 H3.8 V7 H0.6Z" fill="#2cc232" stroke="#0b6e10" stroke-width="1.1" stroke-linejoin="round"/><path d="M5 7.5 V9.5" stroke="#8af08a" stroke-width="1.2"/></svg><div class="t" style="left:31px;top:600px;font-size:13.4px;color:#000;top:601px;">CHFJPY</div><div class="t" style="left:170px;top:600px;font-size:13.9px;color:#0000ff;width:80px;text-align:right;top:601px;">117.844</div><div class="t" style="left:269px;top:600px;font-size:13.9px;color:#0000ff;width:80px;text-align:right;top:601px;">117.944</div><div style="position:absolute;left:6px;top:620px;width:348px;height:21px;background:#dbebb2;border-top:1px solid #c8c8c8;"></div><div style="position:absolute;left:154px;top:620px;width:1px;height:21px;background:#c8c8c8;"></div><div style="position:absolute;left:253px;top:620px;width:1px;height:21px;background:#c8c8c8;"></div><svg style="position:absolute;left:11px;top:628px" width="14" height="11"><path d="M7 0.6 L13.4 7 H10.2 V10.4 H3.8 V7 H0.6Z" fill="#2cc232" stroke="#0b6e10" stroke-width="1.1" stroke-linejoin="round"/><path d="M5 7.5 V9.5" stroke="#8af08a" stroke-width="1.2"/></svg><div class="t" style="left:31px;top:625px;font-size:13.4px;color:#000;top:626px;">EURNZD</div><div class="t" style="left:170px;top:625px;font-size:13.9px;color:#0000ff;width:80px;text-align:right;top:626px;">1.58159</div><div class="t" style="left:269px;top:625px;font-size:13.9px;color:#0000ff;width:80px;text-align:right;top:626px;">1.58279</div><div style="position:absolute;left:354px;top:144px;width:22px;height:497px;background:#f0f0f0;"></div><div style="position:absolute;left:357px;top:165px;width:17px;height:256px;background:#c8c8c8;"></div><svg style="position:absolute;left:359px;top:149px" width="12" height="9"><path d="M1 7 L6 2 L11 7" stroke="#606060" stroke-width="1.8" fill="none"/></svg><svg style="position:absolute;left:359px;top:625px" width="12" height="9"><path d="M1 2 L6 7 L11 2" stroke="#606060" stroke-width="1.8" fill="none"/></svg><div style="position:absolute;left:5px;top:641px;width:371px;height:1px;background:#000;"></div><div style="position:absolute;left:8px;top:641px;width:89px;height:26px;background:#fff;border:1px solid #000;border-top:none;"></div><div class="t" style="left:21px;top:646px;font-size:15px;color:#000;">Символы</div><div class="t" style="left:111px;top:646px;font-size:15px;color:#8a8a8a;">Тиковый график</div><div style="position:absolute;left:237px;top:648px;width:1px;height:15px;background:#777;"></div><div style="position:absolute;left:5px;top:668px;width:371px;height:1px;background:#fff;"></div><div style="position:absolute;left:0px;top:673px;width:381px;height:1px;background:#a0a0a0;"></div><div style="position:absolute;left:0px;top:674px;width:381px;height:1px;background:#fafafa;"></div><div style="position:absolute;left:5px;top:677px;width:352px;height:16px;background:linear-gradient(90deg,#9cb6d6,#b7cde8);"></div><div class="t" style="left:9px;top:678px;font-size:14.5px;color:#000;">Навигатор</div><svg style="position:absolute;left:363px;top:680px" width="11" height="10"><path d="M1 1 L10 9 M10 1 L1 9" stroke="#000" stroke-width="1.7"/></svg><div style="position:absolute;left:5px;top:694px;width:371px;height:498px;background:#fff;border-top:1px solid #c0c0c0;border-left:1px solid #c0c0c0;"></div><div style="position:absolute;left:21px;top:695px;width:1px;height:497px;background:repeating-linear-gradient(#808080 0 1px,transparent 1px 3px);"></div><div style="position:absolute;left:47px;top:695px;width:1px;height:497px;background:repeating-linear-gradient(#808080 0 1px,transparent 1px 3px);"></div><div style="position:absolute;left:48px;top:707px;width:14px;height:1px;background:repeating-linear-gradient(90deg,#808080 0 1px,transparent 1px 2px);"></div><svg style="position:absolute;left:62px;top:697px" width="20" height="20"><rect x="1.5" y="0.5" width="16" height="16" rx="3" fill="#f2d862" stroke="#b89a30"/><text x="5" y="13" font-size="12" font-style="italic" font-weight="bold" fill="#7a6010" font-family="Liberation Serif">f</text><path d="M13 12 L16.5 15.5 L13 19 L9.5 15.5Z" fill="#a8a8a8" stroke="#777" stroke-width="0.7"/></svg><div class="t" style="left:90px;top:699px;font-size:15px;color:#000;">AbleTrend1</div><div style="position:absolute;left:48px;top:729px;width:14px;height:1px;background:repeating-linear-gradient(90deg,#808080 0 1px,transparent 1px 2px);"></div><svg style="position:absolute;left:62px;top:719px" width="20" height="20"><rect x="1.5" y="0.5" width="16" height="16" rx="3" fill="#f2d862" stroke="#b89a30"/><text x="5" y="13" font-size="12" font-style="italic" font-weight="bold" fill="#7a6010" font-family="Liberation Serif">f</text><path d="M13 12 L16.5 15.5 L13 19 L9.5 15.5Z" fill="#a8a8a8" stroke="#777" stroke-width="0.7"/></svg><div class="t" style="left:90px;top:721px;font-size:15px;color:#000;">AbleTrend2</div><div style="position:absolute;left:48px;top:751px;width:14px;height:1px;background:repeating-linear-gradient(90deg,#808080 0 1px,transparent 1px 2px);"></div><svg style="position:absolute;left:62px;top:741px" width="20" height="20"><rect x="1.5" y="0.5" width="16" height="16" rx="3" fill="#f2d862" stroke="#b89a30"/><text x="5" y="13" font-size="12" font-style="italic" font-weight="bold" fill="#7a6010" font-family="Liberation Serif">f</text><path d="M13 12 L16.5 15.5 L13 19 L9.5 15.5Z" fill="#a8a8a8" stroke="#777" stroke-width="0.7"/></svg><div class="t" style="left:90px;top:743px;font-size:15px;color:#000;">AbleTrend3</div><div style="position:absolute;left:48px;top:773px;width:14px;height:1px;background:repeating-linear-gradient(90deg,#808080 0 1px,transparent 1px 2px);"></div><svg style="position:absolute;left:62px;top:763px" width="20" height="20"><rect x="1.5" y="0.5" width="16" height="16" rx="3" fill="#f2d862" stroke="#b89a30"/><text x="5" y="13" font-size="12" font-style="italic" font-weight="bold" fill="#7a6010" font-family="Liberation Serif">f</text><path d="M13 12 L16.5 15.5 L13 19 L9.5 15.5Z" fill="#a8a8a8" stroke="#777" stroke-width="0.7"/></svg><div class="t" style="left:90px;top:765px;font-size:15px;color:#000;">AbleTrendSig</div><div style="position:absolute;left:48px;top:795px;width:14px;height:1px;background:repeating-linear-gradient(90deg,#808080 0 1px,transparent 1px 2px);"></div><svg style="position:absolute;left:62px;top:785px" width="20" height="20"><rect x="1.5" y="0.5" width="16" height="16" rx="3" fill="#f2d862" stroke="#b89a30"/><text x="5" y="13" font-size="12" font-style="italic" font-weight="bold" fill="#7a6010" font-family="Liberation Serif">f</text><path d="M13 12 L16.5 15.5 L13 19 L9.5 15.5Z" fill="#a8a8a8" stroke="#777" stroke-width="0.7"/></svg><div class="t" style="left:90px;top:787px;font-size:15px;color:#000;">AbleTrendTS</div><div style="position:absolute;left:48px;top:817px;width:14px;height:1px;background:repeating-linear-gradient(90deg,#808080 0 1px,transparent 1px 2px);"></div><svg style="position:absolute;left:62px;top:807px" width="20" height="20"><rect x="1.5" y="0.5" width="16" height="16" rx="3" fill="#f2d862" stroke="#b89a30"/><text x="5" y="13" font-size="12" font-style="italic" font-weight="bold" fill="#7a6010" font-family="Liberation Serif">f</text><path d="M13 12 L16.5 15.5 L13 19 L9.5 15.5Z" fill="#f0d050" stroke="#777" stroke-width="0.7"/></svg><div class="t" style="left:90px;top:809px;font-size:15px;color:#000;">Accelerator</div><div style="position:absolute;left:48px;top:839px;width:14px;height:1px;background:repeating-linear-gradient(90deg,#808080 0 1px,transparent 1px 2px);"></div><svg style="position:absolute;left:62px;top:829px" width="20" height="20"><rect x="1.5" y="0.5" width="16" height="16" rx="3" fill="#f2d862" stroke="#b89a30"/><text x="5" y="13" font-size="12" font-style="italic" font-weight="bold" fill="#7a6010" font-family="Liberation Serif">f</text><path d="M13 12 L16.5 15.5 L13 19 L9.5 15.5Z" fill="#f0d050" stroke="#777" stroke-width="0.7"/></svg><div class="t" style="left:90px;top:831px;font-size:15px;color:#000;">Accumulation</div><div style="position:absolute;left:48px;top:861px;width:14px;height:1px;background:repeating-linear-gradient(90deg,#808080 0 1px,transparent 1px 2px);"></div><svg style="position:absolute;left:62px;top:851px" width="20" height="20"><rect x="1.5" y="0.5" width="16" height="16" rx="3" fill="#f2d862" stroke="#b89a30"/><text x="5" y="13" font-size="12" font-style="italic" font-weight="bold" fill="#7a6010" font-family="Liberation Serif">f</text><path d="M13 12 L16.5 15.5 L13 19 L9.5 15.5Z" fill="#f0d050" stroke="#777" stroke-width="0.7"/></svg><div class="t" style="left:90px;top:853px;font-size:15px;color:#000;">Alligator</div><div style="position:absolute;left:48px;top:883px;width:14px;height:1px;background:repeating-linear-gradient(90deg,#808080 0 1px,transparent 1px 2px);"></div><svg style="position:absolute;left:62px;top:873px" width="20" height="20"><rect x="1.5" y="0.5" width="16" height="16" rx="3" fill="#f2d862" stroke="#b89a30"/><text x="5" y="13" font-size="12" font-style="italic" font-weight="bold" fill="#7a6010" font-family="Liberation Serif">f</text><path d="M13 12 L16.5 15.5 L13 19 L9.5 15.5Z" fill="#a8a8a8" stroke="#777" stroke-width="0.7"/></svg><div class="t" style="left:90px;top:875px;font-size:15px;color:#000;">APAZones</div><div style="position:absolute;left:48px;top:905px;width:14px;height:1px;background:repeating-linear-gradient(90deg,#808080 0 1px,transparent 1px 2px);"></div><svg style="position:absolute;left:62px;top:895px" width="20" height="20"><rect x="1.5" y="0.5" width="16" height="16" rx="3" fill="#f2d862" stroke="#b89a30"/><text x="5" y="13" font-size="12" font-style="italic" font-weight="bold" fill="#7a6010" font-family="Liberation Serif">f</text><path d="M13 12 L16.5 15.5 L13 19 L9.5 15.5Z" fill="#a8a8a8" stroke="#777" stroke-width="0.7"/></svg><div class="t" style="left:90px;top:897px;font-size:15px;color:#000;">APAZones Time</div><div style="position:absolute;left:48px;top:927px;width:14px;height:1px;background:repeating-linear-gradient(90deg,#808080 0 1px,transparent 1px 2px);"></div><svg style="position:absolute;left:62px;top:917px" width="20" height="20"><rect x="1.5" y="0.5" width="16" height="16" rx="3" fill="#f2d862" stroke="#b89a30"/><text x="5" y="13" font-size="12" font-style="italic" font-weight="bold" fill="#7a6010" font-family="Liberation Serif">f</text><path d="M13 12 L16.5 15.5 L13 19 L9.5 15.5Z" fill="#f0d050" stroke="#777" stroke-width="0.7"/></svg><div class="t" style="left:90px;top:919px;font-size:15px;color:#000;">ATR</div><div style="position:absolute;left:48px;top:949px;width:14px;height:1px;background:repeating-linear-gradient(90deg,#808080 0 1px,transparent 1px 2px);"></div><svg style="position:absolute;left:62px;top:939px" width="20" height="20"><rect x="1.5" y="0.5" width="16" height="16" rx="3" fill="#f2d862" stroke="#b89a30"/><text x="5" y="13" font-size="12" font-style="italic" font-weight="bold" fill="#7a6010" font-family="Liberation Serif">f</text><path d="M13 12 L16.5 15.5 L13 19 L9.5 15.5Z" fill="#f0d050" stroke="#777" stroke-width="0.7"/></svg><div class="t" style="left:90px;top:941px;font-size:15px;color:#000;">Awesome</div><div style="position:absolute;left:48px;top:971px;width:14px;height:1px;background:repeating-linear-gradient(90deg,#808080 0 1px,transparent 1px 2px);"></div><svg style="position:absolute;left:62px;top:961px" width="20" height="20"><rect x="1.5" y="0.5" width="16" height="16" rx="3" fill="#f2d862" stroke="#b89a30"/><text x="5" y="13" font-size="12" font-style="italic" font-weight="bold" fill="#7a6010" font-family="Liberation Serif">f</text><path d="M13 12 L16.5 15.5 L13 19 L9.5 15.5Z" fill="#f0d050" stroke="#777" stroke-width="0.7"/></svg><div class="t" style="left:90px;top:963px;font-size:15px;color:#000;">Bands</div><div style="position:absolute;left:48px;top:993px;width:14px;height:1px;background:repeating-linear-gradient(90deg,#808080 0 1px,transparent 1px 2px);"></div><svg style="position:absolute;left:62px;top:983px" width="20" height="20"><rect x="1.5" y="0.5" width="16" height="16" rx="3" fill="#f2d862" stroke="#b89a30"/><text x="5" y="13" font-size="12" font-style="italic" font-weight="bold" fill="#7a6010" font-family="Liberation Serif">f</text><path d="M13 12 L16.5 15.5 L13 19 L9.5 15.5Z" fill="#f0d050" stroke="#777" stroke-width="0.7"/></svg><div class="t" style="left:90px;top:985px;font-size:15px;color:#000;">Bears</div><div style="position:absolute;left:48px;top:1015px;width:14px;height:1px;background:repeating-linear-gradient(90deg,#808080 0 1px,transparent 1px 2px);"></div><svg style="position:absolute;left:62px;top:1005px" width="20" height="20"><rect x="1.5" y="0.5" width="16" height="16" rx="3" fill="#f2d862" stroke="#b89a30"/><text x="5" y="13" font-size="12" font-style="italic" font-weight="bold" fill="#7a6010" font-family="Liberation Serif">f</text><path d="M13 12 L16.5 15.5 L13 19 L9.5 15.5Z" fill="#f0d050" stroke="#777" stroke-width="0.7"/></svg><div class="t" style="left:90px;top:1007px;font-size:15px;color:#000;">Bulls</div><div style="position:absolute;left:48px;top:1037px;width:14px;height:1px;background:repeating-linear-gradient(90deg,#808080 0 1px,transparent 1px 2px);"></div><svg style="position:absolute;left:62px;top:1027px" width="20" height="20"><rect x="1.5" y="0.5" width="16" height="16" rx="3" fill="#f2d862" stroke="#b89a30"/><text x="5" y="13" font-size="12" font-style="italic" font-weight="bold" fill="#7a6010" font-family="Liberation Serif">f</text><path d="M13 12 L16.5 15.5 L13 19 L9.5 15.5Z" fill="#f0d050" stroke="#777" stroke-width="0.7"/></svg><div class="t" style="left:90px;top:1029px;font-size:15px;color:#000;">CCI</div><div style="position:absolute;left:48px;top:1059px;width:14px;height:1px;background:repeating-linear-gradient(90deg,#808080 0 1px,transparent 1px 2px);"></div><svg style="position:absolute;left:62px;top:1049px" width="20" height="20"><rect x="1.5" y="0.5" width="16" height="16" rx="3" fill="#f2d862" stroke="#b89a30"/><text x="5" y="13" font-size="12" font-style="italic" font-weight="bold" fill="#7a6010" font-family="Liberation Serif">f</text><path d="M13 12 L16.5 15.5 L13 19 L9.5 15.5Z" fill="#f0d050" stroke="#777" stroke-width="0.7"/></svg><div class="t" style="left:90px;top:1051px;font-size:15px;color:#000;">Custom Moving Averages</div><div style="position:absolute;left:48px;top:1081px;width:14px;height:1px;background:repeating-linear-gradient(90deg,#808080 0 1px,transparent 1px 2px);"></div><svg style="position:absolute;left:62px;top:1071px" width="20" height="20"><rect x="1.5" y="0.5" width="16" height="16" rx="3" fill="#f2d862" stroke="#b89a30"/><text x="5" y="13" font-size="12" font-style="italic" font-weight="bold" fill="#7a6010" font-family="Liberation Serif">f</text><path d="M13 12 L16.5 15.5 L13 19 L9.5 15.5Z" fill="#f0d050" stroke="#777" stroke-width="0.7"/></svg><div class="t" style="left:90px;top:1073px;font-size:15px;color:#000;">Heiken Ashi</div><div style="position:absolute;left:48px;top:1103px;width:14px;height:1px;background:repeating-linear-gradient(90deg,#808080 0 1px,transparent 1px 2px);"></div><svg style="position:absolute;left:62px;top:1093px" width="20" height="20"><rect x="1.5" y="0.5" width="16" height="16" rx="3" fill="#f2d862" stroke="#b89a30"/><text x="5" y="13" font-size="12" font-style="italic" font-weight="bold" fill="#7a6010" font-family="Liberation Serif">f</text><path d="M13 12 L16.5 15.5 L13 19 L9.5 15.5Z" fill="#f0d050" stroke="#777" stroke-width="0.7"/></svg><div class="t" style="left:90px;top:1095px;font-size:15px;color:#000;">Ichimoku</div><div style="position:absolute;left:48px;top:1125px;width:14px;height:1px;background:repeating-linear-gradient(90deg,#808080 0 1px,transparent 1px 2px);"></div><svg style="position:absolute;left:62px;top:1115px" width="20" height="20"><rect x="1.5" y="0.5" width="16" height="16" rx="3" fill="#f2d862" stroke="#b89a30"/><text x="5" y="13" font-size="12" font-style="italic" font-weight="bold" fill="#7a6010" font-family="Liberation Serif">f</text><path d="M13 12 L16.5 15.5 L13 19 L9.5 15.5Z" fill="#f0d050" stroke="#777" stroke-width="0.7"/></svg><div class="t" style="left:90px;top:1117px;font-size:15px;color:#000;">iExposure</div><div style="position:absolute;left:48px;top:1147px;width:14px;height:1px;background:repeating-linear-gradient(90deg,#808080 0 1px,transparent 1px 2px);"></div><svg style="position:absolute;left:62px;top:1137px" width="20" height="20"><rect x="1.5" y="0.5" width="16" height="16" rx="3" fill="#f2d862" stroke="#b89a30"/><text x="5" y="13" font-size="12" font-style="italic" font-weight="bold" fill="#7a6010" font-family="Liberation Serif">f</text><path d="M13 12 L16.5 15.5 L13 19 L9.5 15.5Z" fill="#a8a8a8" stroke="#777" stroke-width="0.7"/></svg><div class="t" style="left:90px;top:1139px;font-size:15px;color:#000;">IFX_CamarilliaEquation</div><div style="position:absolute;left:48px;top:1169px;width:14px;height:1px;background:repeating-linear-gradient(90deg,#808080 0 1px,transparent 1px 2px);"></div><svg style="position:absolute;left:62px;top:1159px" width="20" height="20"><rect x="1.5" y="0.5" width="16" height="16" rx="3" fill="#f2d862" stroke="#b89a30"/><text x="5" y="13" font-size="12" font-style="italic" font-weight="bold" fill="#7a6010" font-family="Liberation Serif">f</text><path d="M13 12 L16.5 15.5 L13 19 L9.5 15.5Z" fill="#a8a8a8" stroke="#777" stroke-width="0.7"/></svg><div class="t" style="left:90px;top:1161px;font-size:15px;color:#000;">IFX_CHO</div><div style="position:absolute;left:48px;top:1191px;width:14px;height:1px;background:repeating-linear-gradient(90deg,#808080 0 1px,transparent 1px 2px);"></div><svg style="position:absolute;left:62px;top:1181px" width="20" height="20"><rect x="1.5" y="0.5" width="16" height="16" rx="3" fill="#f2d862" stroke="#b89a30"/><text x="5" y="13" font-size="12" font-style="italic" font-weight="bold" fill="#7a6010" font-family="Liberation Serif">f</text><path d="M13 12 L16.5 15.5 L13 19 L9.5 15.5Z" fill="#f0d050" stroke="#777" stroke-width="0.7"/></svg><div class="t" style="left:90px;top:1183px;font-size:15px;color:#000;">IFX_Donchian</div><div style="position:absolute;left:355px;top:695px;width:21px;height:497px;background:#f0f0f0;"></div><div style="position:absolute;left:357px;top:794px;width:17px;height:153px;background:#c8c8c8;"></div><svg style="position:absolute;left:359px;top:701px" width="12" height="9"><path d="M1 7 L6 2 L11 7" stroke="#606060" stroke-width="1.8" fill="none"/></svg><svg style="position:absolute;left:359px;top:1175px" width="12" height="9"><path d="M1 2 L6 7 L11 2" stroke="#606060" stroke-width="1.8" fill="none"/></svg><div style="position:absolute;left:5px;top:1192px;width:371px;height:27px;background:#f0f0f0;"></div><div style="position:absolute;left:5px;top:1192px;width:371px;height:1px;background:#000;"></div><div style="position:absolute;left:8px;top:1192px;width:74px;height:25px;background:#fff;border:1px solid #000;border-top:none;"></div><div class="t" style="left:21px;top:1197px;font-size:15px;color:#000;">Общие</div><div class="t" style="left:96px;top:1197px;font-size:15px;color:#8a8a8a;">Избранное</div><div style="position:absolute;left:186px;top:1197px;width:1px;height:17px;background:#777;"></div><div style="position:absolute;left:5px;top:1219px;width:371px;height:1px;background:#fff;"></div><div style="position:absolute;left:383px;top:123px;width:2175px;height:1101px;background:#000;"></div><div style="position:absolute;left:2558px;top:123px;width:2px;height:1101px;background:#f0f0f0;"></div><svg style="position:absolute;left:0;top:0" width="2560" height="1390" viewBox="0 0 2560 1390" shape-rendering="crispEdges"><path d="M434.5 126V1200M482.5 126V1200M530.5 126V1200M578.5 126V1200M626.5 126V1200M674.5 126V1200M722.5 126V1200M770.5 126V1200M818.5 126V1200M866.5 126V1200M914.5 126V1200M962.5 126V1200M1010.5 126V1200M1058.5 126V1200M1106.5 126V1200M1154.5 126V1200M1202.5 126V1200M1250.5 126V1200M1298.5 126V1200M1346.5 126V1200M1394.5 126V1200M1442.5 126V1200M1490.5 126V1200M1538.5 126V1200M1586.5 126V1200M1634.5 126V1200M1682.5 126V1200M1730.5 126V1200M1778.5 126V1200M1826.5 126V1200M1874.5 126V1200M1922.5 126V1200M1970.5 126V1200M2018.5 126V1200M2066.5 126V1200M2114.5 126V1200M2162.5 126V1200M2210.5 126V1200M2258.5 126V1200M2306.5 126V1200M2354.5 126V1200M2402.5 126V1200M2450.5 126V1200" stroke="#8593a3" stroke-width="1" stroke-dasharray="3 3" stroke-dashoffset="0" fill="none"/><path d="M387 154.5H2498M387 208.5H2498M387 261.5H2498M387 315.5H2498M387 369.5H2498M387 422.5H2498M387 476.5H2498M387 529.5H2498M387 583.5H2498M387 637.5H2498M387 690.5H2498M387 744.5H2498M387 798.5H2498M387 851.5H2498M387 905.5H2498M387 959.5H2498M387 1012.5H2498M387 1066.5H2498M387 1120.5H2498M387 1173.5H2498" stroke="#8593a3" stroke-width="1" stroke-dasharray="3 3" fill="none"/><path d="M386 878.5H2498" stroke="#7a8798" stroke-width="1"/><path d="M385.5 126.5H2498.5V1200.5H385.5Z" stroke="#fff" stroke-width="1" fill="none"/><path d="M2499 154.5H2501M2499 208.5H2501M2499 261.5H2501M2499 315.5H2501M2499 369.5H2501M2499 422.5H2501M2499 476.5H2501M2499 529.5H2501M2499 583.5H2501M2499 637.5H2501M2499 690.5H2501M2499 744.5H2501M2499 798.5H2501M2499 851.5H2501M2499 905.5H2501M2499 959.5H2501M2499 1012.5H2501M2499 1066.5H2501M2499 1120.5H2501M2499 1173.5H2501" stroke="#fff" stroke-width="1"/><path d="M386.5 1201V1204M482.5 1201V1204M578.5 1201V1204M674.5 1201V1204M770.5 1201V1204M866.5 1201V1204M962.5 1201V1204M1058.5 1201V1204M1154.5 1201V1204M1250.5 1201V1204M1346.5 1201V1204M1442.5 1201V1204M1538.5 1201V1204M1634.5 1201V1204M1730.5 1201V1204M1826.5 1201V1204M1922.5 1201V1204M2018.5 1201V1204M2114.5 1201V1204M2210.5 1201V1204M2306.5 1201V1204M2402.5 1201V1204" stroke="#fff" stroke-width="1"/><path d="M386.5 535V648M384 591.5H386M387 571.5H389M394.5 642V703M392 642.5H394M395 651.5H397M402.5 674V773M400 674.5H402M403 738.5H405M410.5 674V762M408 738.5H410M411 680.5H413M418.5 739V826M416 739.5H418M419 785.5H421M426.5 771V826M424 785.5H426M427 791.5H429M434.5 771V805M432 791.5H434M435 773.5H437M442.5 749V794M440 773.5H442M443 771.5H445M450.5 760V816M448 771.5H450M451 762.5H453M458.5 760V864M456 762.5H458M459 805.5H461M466.5 765V816M464 805.5H466M467 768.5H469M474.5 722V799M472 768.5H474M475 729.5H477M482.5 685V773M480 729.5H482M483 722.5H485M490.5 771V794M488 771.5H490M491 789.5H493M498.5 685V778M496 777.5H498M499 696.5H501M506.5 685V719M504 696.5H506M507 692.5H509M514.5 647V714M512 692.5H514M515 688.5H517M522.5 637V676M520 675.5H522M523 673.5H525M530.5 610V692M528 673.5H530M531 657.5H533M538.5 631V692M536 657.5H538M539 655.5H541M546.5 653V703M544 655.5H546M547 701.5H549M554.5 631V671M552 670.5H554M555 633.5H557M562.5 670V719M560 670.5H562M563 711.5H565M570.5 680V730M568 711.5H570M571 694.5H573M578.5 653V713M576 694.5H578M579 662.5H581M586.5 556V676M584 662.5H586M587 570.5H589M594.5 562V644M592 570.5H594M595 587.5H597M602.5 487V569M600 568.5H602M603 553.5H605M610.5 492V558M608 553.5H610M611 504.5H613M618.5 370V547M616 504.5H618M619 472.5H621M626.5 369V407M624 406.5H626M627 393.5H629M634.5 395V429M632 395.5H634M635 407.5H637M642.5 406V482M640 407.5H642M643 447.5H645M650.5 449V482M648 449.5H650M651 451.5H653M658.5 460V531M656 460.5H658M659 464.5H661M666.5 347V520M664 464.5H666M667 382.5H669M674.5 433V505M672 433.5H674M675 481.5H677M682.5 412V434M680 433.5H682M683 421.5H685M690.5 422V467M688 422.5H690M691 436.5H693M698.5 422V456M696 436.5H698M699 441.5H701M706.5 444V504M704 444.5H706M707 471.5H709M714.5 492V531M712 492.5H714M715 503.5H717M722.5 406V515M720 503.5H722M723 492.5H725M730.5 363V407M728 406.5H730M731 393.5H733M738.5 353V407M736 393.5H738M739 366.5H741M746.5 342V477M744 366.5H746M747 419.5H749M754.5 401V435M752 419.5H754M755 418.5H757M762.5 353V445M760 418.5H762M763 433.5H765M770.5 319V360M768 359.5H770M771 348.5H773M778.5 353V413M776 353.5H778M779 370.5H781M786.5 406V536M784 406.5H786M787 532.5H789M794.5 487V509M792 508.5H794M795 489.5H797M802.5 476V493M800 489.5H802M803 483.5H805M810.5 471V520M808 483.5H810M811 507.5H813M818.5 498V611M816 507.5H818M819 515.5H821M826.5 578V627M824 578.5H826M827 601.5H829M834.5 562V606M832 601.5H834M835 564.5H837M842.5 540V617M840 564.5H842M843 591.5H845M850.5 546V623M848 591.5H850M851 604.5H853M858.5 540V607M856 604.5H858M859 578.5H861M866.5 578V607M864 578.5H866M867 603.5H869M874.5 572V611M872 603.5H874M875 584.5H877M882.5 615V702M880 615.5H882M883 675.5H885M890.5 626V734M888 675.5H890M891 690.5H893M898.5 626V734M896 690.5H898M899 688.5H901M906.5 621V665M904 664.5H906M907 641.5H909M914.5 530V656M912 641.5H914M915 635.5H917M922.5 503V558M920 557.5H922M923 554.5H925M930.5 503V655M928 554.5H930M931 575.5H933M938.5 615V702M936 615.5H938M939 672.5H941M946.5 654V750M944 672.5H946M947 660.5H949M954.5 685V746M952 685.5H954M955 727.5H957M962.5 619V699M960 698.5H962M963 670.5H965M970.5 642V713M968 670.5H970M971 712.5H973M978.5 626V713M976 712.5H978M979 697.5H981M986.5 621V670M984 669.5H986M987 635.5H989M994.5 615V746M992 635.5H994M995 665.5H997M1002.5 749V857M1000 749.5H1002M1003 821.5H1005M1010.5 797V837M1008 821.5H1010M1011 798.5H1013M1018.5 792V873M1016 798.5H1018M1019 829.5H1021M1026.5 680V820M1024 819.5H1026M1027 703.5H1029M1034.5 519V708M1032 703.5H1034M1035 541.5H1037M1042.5 508V574M1040 541.5H1042M1043 512.5H1045M1050.5 454V521M1048 512.5H1050M1051 505.5H1053M1058.5 492V557M1056 505.5H1058M1059 500.5H1061M1066.5 529V563M1064 529.5H1066M1067 537.5H1069M1074.5 460V531M1072 530.5H1074M1075 487.5H1077M1082.5 460V542M1080 487.5H1082M1083 531.5H1085M1090.5 513V584M1088 531.5H1090M1091 519.5H1093M1098.5 534V584M1096 534.5H1098M1099 556.5H1101M1106.5 562V580M1104 562.5H1106M1107 571.5H1109M1114.5 519V568M1112 567.5H1114M1115 561.5H1117M1122.5 465V557M1120 556.5H1122M1123 540.5H1125M1130.5 551V584M1128 551.5H1130M1131 579.5H1133M1138.5 572V659M1136 579.5H1138M1139 596.5H1141M1146.5 631V735M1144 631.5H1146M1147 674.5H1149M1154.5 605V708M1152 674.5H1154M1155 642.5H1157M1162.5 615V675M1160 642.5H1162M1163 667.5H1165M1170.5 642V718M1168 667.5H1170M1171 714.5H1173M1178.5 653V706M1176 705.5H1178M1179 661.5H1181M1186.5 529V664M1184 661.5H1186M1187 553.5H1189M1194.5 562V616M1192 562.5H1194M1195 574.5H1197M1202.5 605V645M1200 605.5H1202M1203 614.5H1205M1210.5 534V623M1208 614.5H1210M1211 577.5H1213M1218.5 524V633M1216 577.5H1218M1219 588.5H1221M1226.5 621V664M1224 621.5H1226M1227 632.5H1229M1234.5 610V675M1232 632.5H1234M1235 610.5H1237M1242.5 534V616M1240 610.5H1242M1243 568.5H1245M1250.5 533V557M1248 556.5H1250M1251 541.5H1253M1258.5 519V541M1256 540.5H1258M1259 531.5H1261M1266.5 476V541M1264 531.5H1266M1267 537.5H1269M1274.5 428V473M1272 472.5H1274M1275 458.5H1277M1282.5 406V455M1280 454.5H1282M1283 431.5H1285M1290.5 406V498M1288 431.5H1290M1291 462.5H1293M1298.5 325V455M1296 454.5H1298M1299 412.5H1301M1306.5 310V348M1304 347.5H1306M1307 312.5H1309M1314.5 304V348M1312 312.5H1314M1315 343.5H1317M1322.5 213V354M1320 343.5H1322M1323 322.5H1325M1330.5 218V349M1328 322.5H1330M1331 332.5H1333M1338.5 310V408M1336 332.5H1338M1339 387.5H1341M1346.5 326V397M1344 387.5H1346M1347 353.5H1349M1354.5 337V482M1352 353.5H1354M1355 394.5H1357M1362.5 379V456M1360 394.5H1362M1363 387.5H1365M1370.5 433V596M1368 433.5H1370M1371 536.5H1373M1378.5 572V649M1376 572.5H1378M1379 577.5H1381M1386.5 519V573M1384 572.5H1386M1387 523.5H1389M1394.5 402V514M1392 513.5H1394M1395 425.5H1397M1402.5 245V418M1400 417.5H1402M1403 273.5H1405M1410.5 267V338M1408 273.5H1410M1411 291.5H1413M1418.5 310V360M1416 310.5H1418M1419 313.5H1421M1426.5 304V365M1424 313.5H1426M1427 304.5H1429M1434.5 229V312M1432 304.5H1434M1435 241.5H1437M1442.5 208V322M1440 241.5H1442M1443 219.5H1445M1450.5 245V360M1448 245.5H1450M1451 286.5H1453M1458.5 347V424M1456 347.5H1458M1459 349.5H1461M1466.5 256V430M1464 349.5H1466M1467 407.5H1469M1474.5 219V280M1472 279.5H1474M1475 256.5H1477M1482.5 245V290M1480 256.5H1482M1483 252.5H1485M1490.5 251V285M1488 252.5H1490M1491 259.5H1493M1498.5 267V376M1496 267.5H1498M1499 305.5H1501M1506.5 358V440M1504 358.5H1506M1507 387.5H1509M1514.5 385V434M1512 387.5H1514M1515 391.5H1517M1522.5 417V456M1520 417.5H1522M1523 449.5H1525M1530.5 412V456M1528 449.5H1530M1531 455.5H1533M1538.5 444V472M1536 455.5H1538M1539 457.5H1541M1546.5 460V489M1544 460.5H1546M1547 474.5H1549M1554.5 428V456M1552 455.5H1554M1555 430.5H1557M1562.5 401V439M1560 430.5H1562M1563 405.5H1565M1570.5 390V429M1568 405.5H1570M1571 403.5H1573M1578.5 433V493M1576 433.5H1578M1579 449.5H1581M1586.5 481V572M1584 481.5H1586M1587 556.5H1589M1594.5 540V632M1592 556.5H1594M1595 555.5H1597M1602.5 535V616M1600 555.5H1602M1603 537.5H1605M1610.5 594V788M1608 594.5H1610M1611 778.5H1613M1618.5 755V831M1616 778.5H1618M1619 795.5H1621M1626.5 792V847M1624 795.5H1626M1627 800.5H1629M1634.5 727V789M1632 788.5H1634M1635 760.5H1637M1642.5 755V777M1640 760.5H1642M1643 756.5H1645M1650.5 739V771M1648 756.5H1650M1651 755.5H1653M1658.5 712V815M1656 755.5H1658M1659 812.5H1661M1666.5 780V815M1664 812.5H1666M1667 809.5H1669M1674.5 819V927M1672 819.5H1674M1675 893.5H1677M1682.5 865V907M1680 893.5H1682M1683 876.5H1685M1690.5 882V959M1688 882.5H1690M1691 910.5H1693M1698.5 893V938M1696 910.5H1698M1699 900.5H1701M1706.5 887V932M1704 900.5H1706M1707 921.5H1709M1714.5 900V938M1712 921.5H1714M1715 920.5H1717M1722.5 852V911M1720 910.5H1722M1723 897.5H1725M1730.5 860V891M1728 890.5H1730M1731 870.5H1733M1738.5 856V905M1736 870.5H1738M1739 867.5H1741M1746.5 882V976M1744 882.5H1746M1747 957.5H1749M1754.5 770V932M1752 931.5H1754M1755 929.5H1757M1762.5 814V879M1760 878.5H1762M1763 869.5H1765M1770.5 882V932M1768 882.5H1770M1771 921.5H1773M1778.5 823V905M1776 904.5H1778M1779 889.5H1781M1786.5 814V864M1784 863.5H1786M1787 850.5H1789M1794.5 823V853M1792 850.5H1794M1795 830.5H1797M1802.5 834V879M1800 834.5H1802M1803 857.5H1805M1810.5 846V864M1808 857.5H1810M1811 852.5H1813M1818.5 836V852M1816 851.5H1818M1819 836.5H1821M1826.5 846V896M1824 846.5H1826M1827 847.5H1829M1834.5 835V890M1832 847.5H1834M1835 850.5H1837M1842.5 814V831M1840 830.5H1842M1843 818.5H1845M1850.5 765V815M1848 814.5H1850M1851 799.5H1853M1858.5 803V837M1856 803.5H1858M1859 835.5H1861M1866.5 781V825M1864 824.5H1866M1867 800.5H1869M1874.5 803V841M1872 803.5H1874M1875 838.5H1877M1882.5 846V879M1880 846.5H1882M1883 878.5H1885M1890.5 781V847M1888 846.5H1890M1891 843.5H1893M1898.5 792V852M1896 843.5H1898M1899 814.5H1901M1906.5 830V976M1904 830.5H1906M1907 862.5H1909M1914.5 899V976M1912 899.5H1914M1915 916.5H1917M1922.5 824V906M1920 905.5H1922M1923 840.5H1925M1930.5 787V831M1928 830.5H1930M1931 796.5H1933M1938.5 792V810M1936 796.5H1938M1939 803.5H1941M1946.5 803V821M1944 803.5H1946M1947 818.5H1949M1954.5 797V821M1952 818.5H1954M1955 816.5H1957M1962.5 797V821M1960 816.5H1962M1963 808.5H1965M1970.5 814V879M1968 814.5H1970M1971 856.5H1973M1978.5 809V852M1976 851.5H1978M1979 843.5H1981M1986.5 803V841M1984 840.5H1986M1987 806.5H1989M1994.5 803V863M1992 806.5H1994M1995 842.5H1997M2002.5 809V875M2000 842.5H2002M2003 868.5H2005M2010.5 787V815M2008 814.5H2010M2011 808.5H2013M2018.5 781V821M2016 808.5H2018M2019 810.5H2021M2026.5 734V777M2024 776.5H2026M2027 754.5H2029M2034.5 686V735M2032 734.5H2034M2035 695.5H2037M2042.5 578V686M2040 685.5H2042M2043 662.5H2045M2050.5 578V654M2048 653.5H2050M2051 603.5H2053M2058.5 621V690M2056 621.5H2058M2059 675.5H2061M2066.5 659V766M2064 675.5H2066M2067 762.5H2069M2074.5 749V794M2072 762.5H2074M2075 766.5H2077M2082.5 745V831M2080 766.5H2082M2083 779.5H2085M2090.5 788V848M2088 788.5H2090M2091 844.5H2093M2098.5 815V874M2096 844.5H2098M2099 857.5H2101M2106.5 878V949M2104 878.5H2106M2107 890.5H2109M2114.5 911V988M2112 911.5H2114M2115 921.5H2117M2122.5 980V1084M2120 980.5H2122M2123 996.5H2125M2130.5 997V1136M2128 997.5H2130M2131 1122.5H2133M2138.5 938V1018M2136 1017.5H2138M2139 1002.5H2141M2146.5 905V932M2144 931.5H2146M2147 909.5H2149M2154.5 911V1029M2152 911.5H2154M2155 1008.5H2157M2162.5 925V1029M2160 1008.5H2162M2163 1026.5H2165M2170.5 891V958M2168 957.5H2170M2171 934.5H2173M2178.5 862V958M2176 934.5H2178M2179 895.5H2181M2186.5 953V987M2184 953.5H2186M2187 971.5H2189M2194.5 969V1002M2192 971.5H2194M2195 973.5H2197M2202.5 937V970M2200 969.5H2202M2203 937.5H2205M2210.5 937V987M2208 937.5H2210M2211 985.5H2213M2218.5 926V975M2216 974.5H2218M2219 957.5H2221M2226.5 825V923M2224 922.5H2226M2227 876.5H2229M2234.5 851V895M2232 876.5H2234M2235 891.5H2237M2242.5 841V906M2240 891.5H2242M2243 869.5H2245M2250.5 862V912M2248 869.5H2250M2251 905.5H2253M2258.5 835V858M2256 857.5H2258M2259 853.5H2261M2266.5 840V912M2264 853.5H2266M2267 855.5H2269M2274.5 872V927M2272 872.5H2274M2275 886.5H2277M2282.5 846V912M2280 886.5H2282M2283 865.5H2285M2290.5 840V912M2288 865.5H2290M2291 857.5H2293M2298.5 905V923M2296 905.5H2298M2299 915.5H2301M2306.5 926V971M2304 926.5H2306M2307 937.5H2309M2314.5 926V967M2312 937.5H2314M2315 943.5H2317M2322.5 931V1013M2320 943.5H2322M2323 942.5H2325M2330.5 1017V1077M2328 1017.5H2330M2331 1071.5H2333M2338.5 1023V1061M2336 1060.5H2338M2339 1036.5H2341M2346.5 1017V1072M2344 1036.5H2346M2347 1042.5H2349M2354.5 1039V1090M2352 1042.5H2354M2355 1068.5H2357M2362.5 980V1041M2360 1040.5H2362M2363 1034.5H2365M2370.5 942V1013M2368 1012.5H2370M2371 971.5H2373M2378.5 905V954M2376 953.5H2378M2379 949.5H2381M2386.5 851V928M2384 927.5H2386M2387 889.5H2389M2394.5 803V847M2392 846.5H2394M2395 826.5H2397M2402.5 738V810M2400 809.5H2402M2403 775.5H2405M2410.5 776V816M2408 776.5H2410M2411 777.5H2413M2418.5 792V820M2416 792.5H2418M2419 804.5H2421M2426.5 824V949M2424 824.5H2426M2427 847.5H2429M2434.5 873V928M2432 873.5H2434M2435 873.5H2437M2442.5 899V971M2440 899.5H2442M2443 956.5H2445M2450.5 856V959M2448 956.5H2450M2451 874.5H2453M2458.5 894V938M2456 894.5H2458M2459 914.5H2461M2466.5 873V912M2464 911.5H2466M2467 901.5H2469M2474.5 878V900M2472 899.5H2474M2475 890.5H2477" stroke="#00ff00" stroke-width="1" fill="none"/></svg><svg style="position:absolute;left:0;top:0" width="2560" height="1390" viewBox="0 0 2560 1390"><path d="M646.9 541.5a2.6 2.6 0 1 0 5.2 0a2.6 2.6 0 1 0 -5.2 0M654.9 541.5a2.6 2.6 0 1 0 5.2 0a2.6 2.6 0 1 0 -5.2 0M662.9 541.5a2.6 2.6 0 1 0 5.2 0a2.6 2.6 0 1 0 -5.2 0M670.9 541.5a2.6 2.6 0 1 0 5.2 0a2.6 2.6 0 1 0 -5.2 0M678.9 541.5a2.6 2.6 0 1 0 5.2 0a2.6 2.6 0 1 0 -5.2 0M686.9 541.5a2.6 2.6 0 1 0 5.2 0a2.6 2.6 0 1 0 -5.2 0M694.9 541.5a2.6 2.6 0 1 0 5.2 0a2.6 2.6 0 1 0 -5.2 0M702.9 541.5a2.6 2.6 0 1 0 5.2 0a2.6 2.6 0 1 0 -5.2 0M710.9 541.5a2.6 2.6 0 1 0 5.2 0a2.6 2.6 0 1 0 -5.2 0M718.9 541.5a2.6 2.6 0 1 0 5.2 0a2.6 2.6 0 1 0 -5.2 0M726.9 524.3a2.6 2.6 0 1 0 5.2 0a2.6 2.6 0 1 0 -5.2 0M734.9 524.3a2.6 2.6 0 1 0 5.2 0a2.6 2.6 0 1 0 -5.2 0M742.9 524.3a2.6 2.6 0 1 0 5.2 0a2.6 2.6 0 1 0 -5.2 0M750.9 524.3a2.6 2.6 0 1 0 5.2 0a2.6 2.6 0 1 0 -5.2 0M758.9 514.6a2.6 2.6 0 1 0 5.2 0a2.6 2.6 0 1 0 -5.2 0M766.9 471a2.6 2.6 0 1 0 5.2 0a2.6 2.6 0 1 0 -5.2 0M774.9 471a2.6 2.6 0 1 0 5.2 0a2.6 2.6 0 1 0 -5.2 0M782.9 471a2.6 2.6 0 1 0 5.2 0a2.6 2.6 0 1 0 -5.2 0M1062.9 652a2.6 2.6 0 1 0 5.2 0a2.6 2.6 0 1 0 -5.2 0M1070.9 640a2.6 2.6 0 1 0 5.2 0a2.6 2.6 0 1 0 -5.2 0M1078.9 590a2.6 2.6 0 1 0 5.2 0a2.6 2.6 0 1 0 -5.2 0M1086.9 590a2.6 2.6 0 1 0 5.2 0a2.6 2.6 0 1 0 -5.2 0M1094.9 590a2.6 2.6 0 1 0 5.2 0a2.6 2.6 0 1 0 -5.2 0M1102.9 590a2.6 2.6 0 1 0 5.2 0a2.6 2.6 0 1 0 -5.2 0M1110.9 590a2.6 2.6 0 1 0 5.2 0a2.6 2.6 0 1 0 -5.2 0M1262.9 598a2.6 2.6 0 1 0 5.2 0a2.6 2.6 0 1 0 -5.2 0M1270.9 573.3a2.6 2.6 0 1 0 5.2 0a2.6 2.6 0 1 0 -5.2 0M1278.9 559a2.6 2.6 0 1 0 5.2 0a2.6 2.6 0 1 0 -5.2 0M1286.9 559a2.6 2.6 0 1 0 5.2 0a2.6 2.6 0 1 0 -5.2 0M1294.9 559a2.6 2.6 0 1 0 5.2 0a2.6 2.6 0 1 0 -5.2 0M1302.9 455.4a2.6 2.6 0 1 0 5.2 0a2.6 2.6 0 1 0 -5.2 0M1310.9 455.4a2.6 2.6 0 1 0 5.2 0a2.6 2.6 0 1 0 -5.2 0M1318.9 455.4a2.6 2.6 0 1 0 5.2 0a2.6 2.6 0 1 0 -5.2 0M1326.9 455.4a2.6 2.6 0 1 0 5.2 0a2.6 2.6 0 1 0 -5.2 0M1334.9 455.4a2.6 2.6 0 1 0 5.2 0a2.6 2.6 0 1 0 -5.2 0M1342.9 455.4a2.6 2.6 0 1 0 5.2 0a2.6 2.6 0 1 0 -5.2 0M1350.9 455.4a2.6 2.6 0 1 0 5.2 0a2.6 2.6 0 1 0 -5.2 0M1358.9 455.4a2.6 2.6 0 1 0 5.2 0a2.6 2.6 0 1 0 -5.2 0M1366.9 455.4a2.6 2.6 0 1 0 5.2 0a2.6 2.6 0 1 0 -5.2 0M1390.9 455.5a2.6 2.6 0 1 0 5.2 0a2.6 2.6 0 1 0 -5.2 0M1398.9 455.5a2.6 2.6 0 1 0 5.2 0a2.6 2.6 0 1 0 -5.2 0M1406.9 455.5a2.6 2.6 0 1 0 5.2 0a2.6 2.6 0 1 0 -5.2 0M1414.9 455.5a2.6 2.6 0 1 0 5.2 0a2.6 2.6 0 1 0 -5.2 0M1422.9 455.5a2.6 2.6 0 1 0 5.2 0a2.6 2.6 0 1 0 -5.2 0M1430.9 455.5a2.6 2.6 0 1 0 5.2 0a2.6 2.6 0 1 0 -5.2 0M1814.9 911.4a2.6 2.6 0 1 0 5.2 0a2.6 2.6 0 1 0 -5.2 0M1830.9 911.4a2.6 2.6 0 1 0 5.2 0a2.6 2.6 0 1 0 -5.2 0M1838.9 901.2a2.6 2.6 0 1 0 5.2 0a2.6 2.6 0 1 0 -5.2 0M1846.9 885.4a2.6 2.6 0 1 0 5.2 0a2.6 2.6 0 1 0 -5.2 0M1854.9 885.4a2.6 2.6 0 1 0 5.2 0a2.6 2.6 0 1 0 -5.2 0M1862.9 885.4a2.6 2.6 0 1 0 5.2 0a2.6 2.6 0 1 0 -5.2 0M1870.9 885.4a2.6 2.6 0 1 0 5.2 0a2.6 2.6 0 1 0 -5.2 0M1878.9 885.4a2.6 2.6 0 1 0 5.2 0a2.6 2.6 0 1 0 -5.2 0M1886.9 885.4a2.6 2.6 0 1 0 5.2 0a2.6 2.6 0 1 0 -5.2 0M1894.9 885.4a2.6 2.6 0 1 0 5.2 0a2.6 2.6 0 1 0 -5.2 0M1902.9 885.4a2.6 2.6 0 1 0 5.2 0a2.6 2.6 0 1 0 -5.2 0M1918.9 885.4a2.6 2.6 0 1 0 5.2 0a2.6 2.6 0 1 0 -5.2 0M1926.9 885.4a2.6 2.6 0 1 0 5.2 0a2.6 2.6 0 1 0 -5.2 0M1934.9 885.4a2.6 2.6 0 1 0 5.2 0a2.6 2.6 0 1 0 -5.2 0M1942.9 885.4a2.6 2.6 0 1 0 5.2 0a2.6 2.6 0 1 0 -5.2 0M1950.9 885.4a2.6 2.6 0 1 0 5.2 0a2.6 2.6 0 1 0 -5.2 0M1974.9 885.4a2.6 2.6 0 1 0 5.2 0a2.6 2.6 0 1 0 -5.2 0M1982.9 885.4a2.6 2.6 0 1 0 5.2 0a2.6 2.6 0 1 0 -5.2 0M1990.9 885.4a2.6 2.6 0 1 0 5.2 0a2.6 2.6 0 1 0 -5.2 0M1998.9 885.4a2.6 2.6 0 1 0 5.2 0a2.6 2.6 0 1 0 -5.2 0M2006.9 885.4a2.6 2.6 0 1 0 5.2 0a2.6 2.6 0 1 0 -5.2 0M2014.9 885.4a2.6 2.6 0 1 0 5.2 0a2.6 2.6 0 1 0 -5.2 0M2022.9 851a2.6 2.6 0 1 0 5.2 0a2.6 2.6 0 1 0 -5.2 0M2030.9 813a2.6 2.6 0 1 0 5.2 0a2.6 2.6 0 1 0 -5.2 0M2038.9 780.3a2.6 2.6 0 1 0 5.2 0a2.6 2.6 0 1 0 -5.2 0M2046.9 750.3a2.6 2.6 0 1 0 5.2 0a2.6 2.6 0 1 0 -5.2 0M2054.9 750.3a2.6 2.6 0 1 0 5.2 0a2.6 2.6 0 1 0 -5.2 0M2062.9 750.3a2.6 2.6 0 1 0 5.2 0a2.6 2.6 0 1 0 -5.2 0M2070.9 750.3a2.6 2.6 0 1 0 5.2 0a2.6 2.6 0 1 0 -5.2 0M2262.9 960.3a2.6 2.6 0 1 0 5.2 0a2.6 2.6 0 1 0 -5.2 0M2270.9 960.3a2.6 2.6 0 1 0 5.2 0a2.6 2.6 0 1 0 -5.2 0M2278.9 960.3a2.6 2.6 0 1 0 5.2 0a2.6 2.6 0 1 0 -5.2 0M2286.9 960.3a2.6 2.6 0 1 0 5.2 0a2.6 2.6 0 1 0 -5.2 0M2294.9 960.3a2.6 2.6 0 1 0 5.2 0a2.6 2.6 0 1 0 -5.2 0M2302.9 960.3a2.6 2.6 0 1 0 5.2 0a2.6 2.6 0 1 0 -5.2 0M2310.9 960.3a2.6 2.6 0 1 0 5.2 0a2.6 2.6 0 1 0 -5.2 0M2318.9 960.3a2.6 2.6 0 1 0 5.2 0a2.6 2.6 0 1 0 -5.2 0M2406.9 868.3a2.6 2.6 0 1 0 5.2 0a2.6 2.6 0 1 0 -5.2 0M2414.9 868.3a2.6 2.6 0 1 0 5.2 0a2.6 2.6 0 1 0 -5.2 0M2422.9 868.3a2.6 2.6 0 1 0 5.2 0a2.6 2.6 0 1 0 -5.2 0M2446.9 868.4a2.6 2.6 0 1 0 5.2 0a2.6 2.6 0 1 0 -5.2 0" fill="#3ed4d8"/><path d="M814.9 429a2.6 2.6 0 1 0 5.2 0a2.6 2.6 0 1 0 -5.2 0M822.9 471a2.6 2.6 0 1 0 5.2 0a2.6 2.6 0 1 0 -5.2 0M830.9 471a2.6 2.6 0 1 0 5.2 0a2.6 2.6 0 1 0 -5.2 0M838.9 471a2.6 2.6 0 1 0 5.2 0a2.6 2.6 0 1 0 -5.2 0M846.9 471a2.6 2.6 0 1 0 5.2 0a2.6 2.6 0 1 0 -5.2 0M854.9 497.4a2.6 2.6 0 1 0 5.2 0a2.6 2.6 0 1 0 -5.2 0M862.9 497.4a2.6 2.6 0 1 0 5.2 0a2.6 2.6 0 1 0 -5.2 0M870.9 530.5a2.6 2.6 0 1 0 5.2 0a2.6 2.6 0 1 0 -5.2 0M878.9 530.5a2.6 2.6 0 1 0 5.2 0a2.6 2.6 0 1 0 -5.2 0M886.9 530.5a2.6 2.6 0 1 0 5.2 0a2.6 2.6 0 1 0 -5.2 0M894.9 530.5a2.6 2.6 0 1 0 5.2 0a2.6 2.6 0 1 0 -5.2 0M902.9 530.5a2.6 2.6 0 1 0 5.2 0a2.6 2.6 0 1 0 -5.2 0M910.9 530.5a2.6 2.6 0 1 0 5.2 0a2.6 2.6 0 1 0 -5.2 0M918.9 530.5a2.6 2.6 0 1 0 5.2 0a2.6 2.6 0 1 0 -5.2 0M926.9 530.5a2.6 2.6 0 1 0 5.2 0a2.6 2.6 0 1 0 -5.2 0M934.9 530.5a2.6 2.6 0 1 0 5.2 0a2.6 2.6 0 1 0 -5.2 0M942.9 530.5a2.6 2.6 0 1 0 5.2 0a2.6 2.6 0 1 0 -5.2 0M950.9 530.5a2.6 2.6 0 1 0 5.2 0a2.6 2.6 0 1 0 -5.2 0M958.9 530.5a2.6 2.6 0 1 0 5.2 0a2.6 2.6 0 1 0 -5.2 0M966.9 530.5a2.6 2.6 0 1 0 5.2 0a2.6 2.6 0 1 0 -5.2 0M974.9 530.5a2.6 2.6 0 1 0 5.2 0a2.6 2.6 0 1 0 -5.2 0M982.9 536.4a2.6 2.6 0 1 0 5.2 0a2.6 2.6 0 1 0 -5.2 0M990.9 536.4a2.6 2.6 0 1 0 5.2 0a2.6 2.6 0 1 0 -5.2 0M998.9 586.5a2.6 2.6 0 1 0 5.2 0a2.6 2.6 0 1 0 -5.2 0M1006.9 655.5a2.6 2.6 0 1 0 5.2 0a2.6 2.6 0 1 0 -5.2 0M1014.9 655.5a2.6 2.6 0 1 0 5.2 0a2.6 2.6 0 1 0 -5.2 0M1022.9 655.5a2.6 2.6 0 1 0 5.2 0a2.6 2.6 0 1 0 -5.2 0M1030.9 655.5a2.6 2.6 0 1 0 5.2 0a2.6 2.6 0 1 0 -5.2 0M1182.9 451.3a2.6 2.6 0 1 0 5.2 0a2.6 2.6 0 1 0 -5.2 0M1190.9 451.3a2.6 2.6 0 1 0 5.2 0a2.6 2.6 0 1 0 -5.2 0M1198.9 472.3a2.6 2.6 0 1 0 5.2 0a2.6 2.6 0 1 0 -5.2 0M1206.9 486.3a2.6 2.6 0 1 0 5.2 0a2.6 2.6 0 1 0 -5.2 0M1214.9 486.3a2.6 2.6 0 1 0 5.2 0a2.6 2.6 0 1 0 -5.2 0M1222.9 486.3a2.6 2.6 0 1 0 5.2 0a2.6 2.6 0 1 0 -5.2 0M1230.9 486.3a2.6 2.6 0 1 0 5.2 0a2.6 2.6 0 1 0 -5.2 0M1238.9 486.3a2.6 2.6 0 1 0 5.2 0a2.6 2.6 0 1 0 -5.2 0M1246.9 486.3a2.6 2.6 0 1 0 5.2 0a2.6 2.6 0 1 0 -5.2 0M1254.9 486.3a2.6 2.6 0 1 0 5.2 0a2.6 2.6 0 1 0 -5.2 0M1542.9 409.5a2.6 2.6 0 1 0 5.2 0a2.6 2.6 0 1 0 -5.2 0M1550.9 409.5a2.6 2.6 0 1 0 5.2 0a2.6 2.6 0 1 0 -5.2 0M1558.9 409.5a2.6 2.6 0 1 0 5.2 0a2.6 2.6 0 1 0 -5.2 0M1566.9 409.5a2.6 2.6 0 1 0 5.2 0a2.6 2.6 0 1 0 -5.2 0M1574.9 409.5a2.6 2.6 0 1 0 5.2 0a2.6 2.6 0 1 0 -5.2 0M1582.9 409.5a2.6 2.6 0 1 0 5.2 0a2.6 2.6 0 1 0 -5.2 0M1590.9 452.4a2.6 2.6 0 1 0 5.2 0a2.6 2.6 0 1 0 -5.2 0M1598.9 452.4a2.6 2.6 0 1 0 5.2 0a2.6 2.6 0 1 0 -5.2 0M1606.9 471.3a2.6 2.6 0 1 0 5.2 0a2.6 2.6 0 1 0 -5.2 0M1614.9 623.5a2.6 2.6 0 1 0 5.2 0a2.6 2.6 0 1 0 -5.2 0M1622.9 656.4a2.6 2.6 0 1 0 5.2 0a2.6 2.6 0 1 0 -5.2 0M1630.9 656.4a2.6 2.6 0 1 0 5.2 0a2.6 2.6 0 1 0 -5.2 0M1638.9 656.4a2.6 2.6 0 1 0 5.2 0a2.6 2.6 0 1 0 -5.2 0M1646.9 656.4a2.6 2.6 0 1 0 5.2 0a2.6 2.6 0 1 0 -5.2 0M1654.9 656.4a2.6 2.6 0 1 0 5.2 0a2.6 2.6 0 1 0 -5.2 0M1662.9 656.4a2.6 2.6 0 1 0 5.2 0a2.6 2.6 0 1 0 -5.2 0M1670.9 682.8a2.6 2.6 0 1 0 5.2 0a2.6 2.6 0 1 0 -5.2 0M1678.9 739a2.6 2.6 0 1 0 5.2 0a2.6 2.6 0 1 0 -5.2 0M1686.9 776.2a2.6 2.6 0 1 0 5.2 0a2.6 2.6 0 1 0 -5.2 0M1694.9 793.3a2.6 2.6 0 1 0 5.2 0a2.6 2.6 0 1 0 -5.2 0M1702.9 793.3a2.6 2.6 0 1 0 5.2 0a2.6 2.6 0 1 0 -5.2 0M1710.9 806a2.6 2.6 0 1 0 5.2 0a2.6 2.6 0 1 0 -5.2 0M1718.9 806a2.6 2.6 0 1 0 5.2 0a2.6 2.6 0 1 0 -5.2 0M1726.9 806a2.6 2.6 0 1 0 5.2 0a2.6 2.6 0 1 0 -5.2 0M1734.9 806a2.6 2.6 0 1 0 5.2 0a2.6 2.6 0 1 0 -5.2 0M1742.9 806a2.6 2.6 0 1 0 5.2 0a2.6 2.6 0 1 0 -5.2 0M1750.9 806a2.6 2.6 0 1 0 5.2 0a2.6 2.6 0 1 0 -5.2 0M1822.9 791.4a2.6 2.6 0 1 0 5.2 0a2.6 2.6 0 1 0 -5.2 0M1958.9 743.5a2.6 2.6 0 1 0 5.2 0a2.6 2.6 0 1 0 -5.2 0M1966.9 743.5a2.6 2.6 0 1 0 5.2 0a2.6 2.6 0 1 0 -5.2 0M2118.9 889.3a2.6 2.6 0 1 0 5.2 0a2.6 2.6 0 1 0 -5.2 0M2126.9 889.3a2.6 2.6 0 1 0 5.2 0a2.6 2.6 0 1 0 -5.2 0M2134.9 889.3a2.6 2.6 0 1 0 5.2 0a2.6 2.6 0 1 0 -5.2 0M2142.9 889.3a2.6 2.6 0 1 0 5.2 0a2.6 2.6 0 1 0 -5.2 0M2150.9 889.3a2.6 2.6 0 1 0 5.2 0a2.6 2.6 0 1 0 -5.2 0M2158.9 889.3a2.6 2.6 0 1 0 5.2 0a2.6 2.6 0 1 0 -5.2 0M2166.9 889.3a2.6 2.6 0 1 0 5.2 0a2.6 2.6 0 1 0 -5.2 0M2174.9 889.3a2.6 2.6 0 1 0 5.2 0a2.6 2.6 0 1 0 -5.2 0M2182.9 889.3a2.6 2.6 0 1 0 5.2 0a2.6 2.6 0 1 0 -5.2 0M2190.9 889.3a2.6 2.6 0 1 0 5.2 0a2.6 2.6 0 1 0 -5.2 0M2198.9 889.3a2.6 2.6 0 1 0 5.2 0a2.6 2.6 0 1 0 -5.2 0M2206.9 889.3a2.6 2.6 0 1 0 5.2 0a2.6 2.6 0 1 0 -5.2 0M2214.9 889.3a2.6 2.6 0 1 0 5.2 0a2.6 2.6 0 1 0 -5.2 0M2222.9 889.3a2.6 2.6 0 1 0 5.2 0a2.6 2.6 0 1 0 -5.2 0M2230.9 889.3a2.6 2.6 0 1 0 5.2 0a2.6 2.6 0 1 0 -5.2 0M2238.9 889.3a2.6 2.6 0 1 0 5.2 0a2.6 2.6 0 1 0 -5.2 0M2246.9 889.3a2.6 2.6 0 1 0 5.2 0a2.6 2.6 0 1 0 -5.2 0M2326.9 962.4a2.6 2.6 0 1 0 5.2 0a2.6 2.6 0 1 0 -5.2 0M2334.9 962.4a2.6 2.6 0 1 0 5.2 0a2.6 2.6 0 1 0 -5.2 0M2342.9 962.4a2.6 2.6 0 1 0 5.2 0a2.6 2.6 0 1 0 -5.2 0M2350.9 962.4a2.6 2.6 0 1 0 5.2 0a2.6 2.6 0 1 0 -5.2 0M2358.9 962.4a2.6 2.6 0 1 0 5.2 0a2.6 2.6 0 1 0 -5.2 0M2366.9 962.4a2.6 2.6 0 1 0 5.2 0a2.6 2.6 0 1 0 -5.2 0" fill="#ffc0b8"/></svg><div class="t" style="left:2505px;top:149px;font-size:12.45px;color:#fff;">0.96395</div><div class="t" style="left:2505px;top:203px;font-size:12.45px;color:#fff;">0.96385</div><div class="t" style="left:2505px;top:257px;font-size:12.45px;color:#fff;">0.96375</div><div class="t" style="left:2505px;top:310px;font-size:12.45px;color:#fff;">0.96365</div><div class="t" style="left:2505px;top:364px;font-size:12.45px;color:#fff;">0.96355</div><div class="t" style="left:2505px;top:417px;font-size:12.45px;color:#fff;">0.96345</div><div class="t" style="left:2505px;top:471px;font-size:12.45px;color:#fff;">0.96335</div><div class="t" style="left:2505px;top:525px;font-size:12.45px;color:#fff;">0.96325</div><div class="t" style="left:2505px;top:578px;font-size:12.45px;color:#fff;">0.96315</div><div class="t" style="left:2505px;top:632px;font-size:12.45px;color:#fff;">0.96305</div><div class="t" style="left:2505px;top:686px;font-size:12.45px;color:#fff;">0.96295</div><div class="t" style="left:2505px;top:739px;font-size:12.45px;color:#fff;">0.96285</div><div class="t" style="left:2505px;top:793px;font-size:12.45px;color:#fff;">0.96275</div><div class="t" style="left:2505px;top:847px;font-size:12.45px;color:#fff;">0.96265</div><div class="t" style="left:2505px;top:900px;font-size:12.45px;color:#fff;">0.96255</div><div class="t" style="left:2505px;top:954px;font-size:12.45px;color:#fff;">0.96245</div><div class="t" style="left:2505px;top:1008px;font-size:12.45px;color:#fff;">0.96235</div><div class="t" style="left:2505px;top:1061px;font-size:12.45px;color:#fff;">0.96225</div><div class="t" style="left:2505px;top:1115px;font-size:12.45px;color:#fff;">0.96215</div><div class="t" style="left:2505px;top:1168px;font-size:12.45px;color:#fff;">0.96205</div><div style="position:absolute;left:2500px;top:871px;width:56px;height:14px;background:#fff;"></div><div class="t" style="left:2505px;top:873px;font-size:12.45px;color:#000;">0.96260</div><div class="t" style="left:385px;top:1205px;font-size:12.3px;color:#fff;">12 Jul 2017</div><div class="t" style="left:481px;top:1205px;font-size:12.3px;color:#fff;">12 Jul 10:39</div><div class="t" style="left:577px;top:1205px;font-size:12.3px;color:#fff;">12 Jul 10:51</div><div class="t" style="left:673px;top:1205px;font-size:12.3px;color:#fff;">12 Jul 11:03</div><div class="t" style="left:769px;top:1205px;font-size:12.3px;color:#fff;">12 Jul 11:15</div><div class="t" style="left:865px;top:1205px;font-size:12.3px;color:#fff;">12 Jul 11:27</div><div class="t" style="left:961px;top:1205px;font-size:12.3px;color:#fff;">12 Jul 11:39</div><div class="t" style="left:1057px;top:1205px;font-size:12.3px;color:#fff;">12 Jul 11:51</div><div class="t" style="left:1153px;top:1205px;font-size:12.3px;color:#fff;">12 Jul 12:03</div><div class="t" style="left:1249px;top:1205px;font-size:12.3px;color:#fff;">12 Jul 12:15</div><div class="t" style="left:1345px;top:1205px;font-size:12.3px;color:#fff;">12 Jul 12:27</div><div class="t" style="left:1441px;top:1205px;font-size:12.3px;color:#fff;">12 Jul 12:39</div><div class="t" style="left:1537px;top:1205px;font-size:12.3px;color:#fff;">12 Jul 12:51</div><div class="t" style="left:1633px;top:1205px;font-size:12.3px;color:#fff;">12 Jul 13:03</div><div class="t" style="left:1729px;top:1205px;font-size:12.3px;color:#fff;">12 Jul 13:15</div><div class="t" style="left:1825px;top:1205px;font-size:12.3px;color:#fff;">12 Jul 13:27</div><div class="t" style="left:1921px;top:1205px;font-size:12.3px;color:#fff;">12 Jul 13:39</div><div class="t" style="left:2017px;top:1205px;font-size:12.3px;color:#fff;">12 Jul 13:51</div><div class="t" style="left:2113px;top:1205px;font-size:12.3px;color:#fff;">12 Jul 14:03</div><div class="t" style="left:2209px;top:1205px;font-size:12.3px;color:#fff;">12 Jul 14:15</div><div class="t" style="left:2305px;top:1205px;font-size:12.3px;color:#fff;">12 Jul 14:27</div><div class="t" style="left:2401px;top:1205px;font-size:12.3px;color:#fff;">12 Jul 14:39</div><svg style="position:absolute;left:389px;top:133px" width="10" height="7"><path d="M0 0H9L4.5 6Z" fill="#fff"/></svg><div class="t" style="left:404px;top:131px;font-size:12.4px;color:#fff;">USDCHF,M1&nbsp;&nbsp;0.96257 0.96260 0.96256 0.96260</div><div style="position:absolute;left:0px;top:1224px;width:2560px;height:166px;background:#f0f0f0;"></div><div style="position:absolute;left:0px;top:1224px;width:2560px;height:1px;background:#a0a0a0;"></div><div style="position:absolute;left:0px;top:1225px;width:2560px;height:1px;background:#fafafa;"></div><svg style="position:absolute;left:6px;top:1233px" width="9" height="8"><path d="M0.5 0.5 L8.5 7.5 M8.5 0.5 L0.5 7.5" stroke="#000" stroke-width="1.4"/></svg><div style="position:absolute;left:3px;top:1248px;width:16px;height:108px;background:linear-gradient(90deg,#d4e0ee,#b9cde2);"></div><div class="t" style="left:-26.5px;top:1313px;width:80px;height:16px;transform:rotate(-90deg);font-size:13.5px;color:#000;text-align:center;">Терминал</div><div style="position:absolute;left:20px;top:1230px;width:2536px;height:1px;background:#a0a0a0;"></div><div style="position:absolute;left:20px;top:1231px;width:1px;height:122px;background:#a0a0a0;"></div><div style="position:absolute;left:21px;top:1231px;width:2514px;height:26px;background:#fff;"></div><div style="position:absolute;left:1446px;top:1231px;width:1px;height:26px;background:#e4e4e4;"></div><div style="position:absolute;left:2368px;top:1231px;width:1px;height:26px;background:#e4e4e4;"></div><div class="t" style="left:27px;top:1237px;font-size:15px;color:#000;">Тема</div><div class="t" style="left:1453px;top:1237px;font-size:15px;color:#000;">От</div><div class="t" style="left:2427px;top:1237px;font-size:15px;color:#000;width:100px;text-align:right;">Время</div><div style="position:absolute;left:21px;top:1257px;width:2514px;height:24px;background:#e9e9e9;border-top:1px solid #d0d0d0;"></div><div style="position:absolute;left:1445px;top:1257px;width:1px;height:24px;background:#d0d0d0;"></div><div style="position:absolute;left:2368px;top:1257px;width:1px;height:24px;background:#d0d0d0;"></div><svg style="position:absolute;left:23px;top:1263px" width="18" height="14"><rect x="0.5" y="0.5" width="16" height="12" rx="1.5" fill="#f4e2a8" stroke="#a89448"/><path d="M1 1.5 L8.5 8 L16 1.5 M1 12 L6 6.5 M16 12 L11 6.5" stroke="#a89448" fill="none"/></svg><div class="t" style="left:48px;top:1263px;font-size:14.5px;font-weight:bold;color:#000;">Расписание вебинаров от ИнстаФорекс</div><div class="t" style="left:1453px;top:1263px;font-size:14px;font-weight:bold;color:#000;">NOREPLY</div><div class="t" style="left:2328px;top:1262px;font-size:15.8px;font-weight:bold;color:#000;width:200px;text-align:right;">2017.07.03 12:16</div><div style="position:absolute;left:21px;top:1281px;width:2514px;height:25px;background:#fff;border-top:1px solid #d0d0d0;"></div><div style="position:absolute;left:1445px;top:1281px;width:1px;height:25px;background:#d0d0d0;"></div><div style="position:absolute;left:2368px;top:1281px;width:1px;height:25px;background:#d0d0d0;"></div><svg style="position:absolute;left:23px;top:1287px" width="18" height="14"><rect x="0.5" y="0.5" width="16" height="12" rx="1.5" fill="#f4e2a8" stroke="#a89448"/><path d="M1 1.5 L8.5 8 L16 1.5 M1 12 L6 6.5 M16 12 L11 6.5" stroke="#a89448" fill="none"/></svg><div class="t" style="left:48px;top:1287px;font-size:14.5px;font-weight:bold;color:#000;">Изменения в расписании торгов 3 и 4 июля</div><div class="t" style="left:1453px;top:1287px;font-size:14px;font-weight:bold;color:#000;">NOREPLY</div><div class="t" style="left:2328px;top:1286px;font-size:15.8px;font-weight:bold;color:#000;width:200px;text-align:right;">2017.07.03 11:18</div><div style="position:absolute;left:21px;top:1306px;width:2514px;height:22px;background:#e9e9e9;border-top:1px solid #d0d0d0;"></div><div style="position:absolute;left:1445px;top:1306px;width:1px;height:22px;background:#d0d0d0;"></div><div style="position:absolute;left:2368px;top:1306px;width:1px;height:22px;background:#d0d0d0;"></div><svg style="position:absolute;left:23px;top:1312px" width="18" height="14"><rect x="0.5" y="0.5" width="16" height="12" rx="1.5" fill="#f4e2a8" stroke="#a89448"/><path d="M1 1.5 L8.5 8 L16 1.5 M1 12 L6 6.5 M16 12 L11 6.5" stroke="#a89448" fill="none"/></svg><div class="t" style="left:48px;top:1312px;font-size:14.5px;font-weight:bold;color:#000;">Расписание вебинаров от ИнстаФорекс</div><div class="t" style="left:1453px;top:1312px;font-size:14px;font-weight:bold;color:#000;">NOREPLY</div><div class="t" style="left:2328px;top:1311px;font-size:15.8px;font-weight:bold;color:#000;width:200px;text-align:right;">2017.06.15 11:39</div><div style="position:absolute;left:2534px;top:1231px;width:21px;height:97px;background:#f0f0f0;"></div><div style="position:absolute;left:2535px;top:1252px;width:18px;height:28px;background:#c8c8c8;"></div><svg style="position:absolute;left:2538px;top:1237px" width="12" height="8"><path d="M1 7 L6 2 L11 7" stroke="#606060" stroke-width="1.8" fill="none"/></svg><svg style="position:absolute;left:2538px;top:1313px" width="12" height="8"><path d="M1 1 L6 6 L11 1" stroke="#606060" stroke-width="1.8" fill="none"/></svg><div style="position:absolute;left:20px;top:1328px;width:2535px;height:1px;background:#000;"></div><div style="position:absolute;left:494px;top:1328px;width:77px;height:24px;background:#fff;border:1px solid #000;border-top:none;"></div><div class="t" style="left:36px;top:1333px;font-size:15px;color:#8a8a8a;">Торговля</div><div class="t" style="left:126px;top:1333px;font-size:15px;color:#8a8a8a;">Активы</div><div class="t" style="left:202px;top:1333px;font-size:15px;color:#8a8a8a;">История Счета</div><div class="t" style="left:329px;top:1333px;font-size:15px;color:#8a8a8a;">Новости</div><div class="t" style="left:430px;top:1333px;font-size:15px;color:#8a8a8a;">Алерты</div><div class="t" style="left:507px;top:1333px;font-size:15px;color:#000;">Почта</div><div class="t" style="left:584px;top:1333px;font-size:15px;color:#8a8a8a;">Маркет</div><div class="t" style="left:660px;top:1333px;font-size:15px;color:#8a8a8a;">Сигналы</div><div class="t" style="left:745px;top:1333px;font-size:15px;color:#8a8a8a;">Библиотека</div><div class="t" style="left:852px;top:1333px;font-size:15px;color:#8a8a8a;">Эксперты</div><div class="t" style="left:943px;top:1333px;font-size:15px;color:#8a8a8a;">Журнал</div><div class="t" style="left:391px;top:1339px;font-size:12px;font-weight:bold;color:#e01010;">99</div><div class="t" style="left:552px;top:1339px;font-size:12px;font-weight:bold;color:#e01010;">4</div><div style="position:absolute;left:113px;top:1334px;width:1px;height:17px;background:#777;"></div><div style="position:absolute;left:189px;top:1334px;width:1px;height:17px;background:#777;"></div><div style="position:absolute;left:316px;top:1334px;width:1px;height:17px;background:#777;"></div><div style="position:absolute;left:417px;top:1334px;width:1px;height:17px;background:#777;"></div><div style="position:absolute;left:647px;top:1334px;width:1px;height:17px;background:#777;"></div><div style="position:absolute;left:732px;top:1334px;width:1px;height:17px;background:#777;"></div><div style="position:absolute;left:839px;top:1334px;width:1px;height:17px;background:#777;"></div><div style="position:absolute;left:930px;top:1334px;width:1px;height:17px;background:#777;"></div><div style="position:absolute;left:1009px;top:1334px;width:1px;height:17px;background:#777;"></div><div style="position:absolute;left:0px;top:1355px;width:2556px;height:1px;background:#fff;"></div><div style="position:absolute;left:2555px;top:1226px;width:1px;height:130px;background:#fff;"></div><div style="position:absolute;left:0px;top:1360px;width:2560px;height:1px;background:#a0a0a0;"></div><div style="position:absolute;left:0px;top:1361px;width:2560px;height:29px;background:#f0f0f0;"></div><div class="t" style="left:3px;top:1370px;font-size:15px;color:#000;">Для вызова справки нажмите F1</div><div style="position:absolute;left:1687px;top:1365px;width:1px;height:21px;background:#a0a0a0;"></div><div style="position:absolute;left:1835px;top:1365px;width:1px;height:21px;background:#a0a0a0;"></div><div style="position:absolute;left:1966px;top:1365px;width:1px;height:21px;background:#a0a0a0;"></div><div style="position:absolute;left:2055px;top:1365px;width:1px;height:21px;background:#a0a0a0;"></div><div style="position:absolute;left:2144px;top:1365px;width:1px;height:21px;background:#a0a0a0;"></div><div style="position:absolute;left:2230px;top:1365px;width:1px;height:21px;background:#a0a0a0;"></div><div style="position:absolute;left:2316px;top:1365px;width:1px;height:21px;background:#a0a0a0;"></div><div style="position:absolute;left:2401px;top:1365px;width:1px;height:21px;background:#a0a0a0;"></div><div class="t" style="left:1694px;top:1371px;font-size:15.2px;color:#000;">Default</div><div class="t" style="left:1842px;top:1371px;font-size:14px;color:#000;">2017.07.12 12:03</div><div class="t" style="left:1973px;top:1371px;font-size:14px;color:#000;">O: 0.96299</div><div class="t" style="left:2062px;top:1371px;font-size:14px;color:#000;">H: 0.96311</div><div class="t" style="left:2150px;top:1371px;font-size:14px;color:#000;">L: 0.96292</div><div class="t" style="left:2236px;top:1371px;font-size:14px;color:#000;">C: 0.96309</div><div class="t" style="left:2322px;top:1371px;font-size:14.5px;color:#000;">V: 62</div><svg style="position:absolute;left:2407px;top:1368px" width="32" height="17"><rect x="0" y="0" width="3" height="13.0" fill="#4d7a00"/><rect x="0" y="14.0" width="3" height="2.0" fill="#8e0a00"/><rect x="4" y="0" width="3" height="11.400000000000091" fill="#4d7a00"/><rect x="4" y="12.400000000000091" width="3" height="3.599999999999909" fill="#8e0a00"/><rect x="8" y="0" width="3" height="9.799999999999955" fill="#4d7a00"/><rect x="8" y="10.799999999999955" width="3" height="5.2000000000000455" fill="#8e0a00"/><rect x="12" y="0" width="3" height="8.200000000000045" fill="#4d7a00"/><rect x="12" y="9.200000000000045" width="3" height="6.7999999999999545" fill="#8e0a00"/><rect x="16" y="0" width="3" height="6.599999999999909" fill="#4d7a00"/><rect x="16" y="7.599999999999909" width="3" height="8.400000000000091" fill="#8e0a00"/><rect x="20" y="0" width="3" height="5.0" fill="#4d7a00"/><rect x="20" y="6.0" width="3" height="10.0" fill="#8e0a00"/><rect x="24" y="0" width="3" height="3.400000000000091" fill="#4d7a00"/><rect x="24" y="4.400000000000091" width="3" height="11.599999999999909" fill="#8e0a00"/><rect x="28" y="0" width="3" height="1.7999999999999545" fill="#4d7a00"/><rect x="28" y="2.7999999999999545" width="3" height="13.200000000000045" fill="#8e0a00"/></svg><div class="t" style="left:2443px;top:1370px;font-size:15px;color:#000;">51/0 kb</div><div class="t" style="left:716px;top:1334px;font-family:'Liberation Serif',serif;font-style:italic;font-size:29px;letter-spacing:5.6px;color:#ee2a2e;-webkit-text-stroke:0.7px #ee2a2e;text-shadow:0 0 2px #fff;">www.forex-warez.com, andreybbrv@gmail.com, Skype: andreybbrv</div><div style="position:absolute;left:600px;top:868px;width:484px;height:291px;background:#f0f0f0;border:1px solid #9a9a9a;"></div><div style="position:absolute;left:601px;top:869px;width:482px;height:37px;background:#fff;"></div><svg style="position:absolute;left:610px;top:877px" width="21" height="20"><rect x="0.5" y="0.5" width="16" height="12" fill="#e8f0fa" stroke="#4a86e8"/><rect x="7.5" y="7.5" width="12" height="12" rx="2" fill="#f2d862" stroke="#b89a30"/><text x="10" y="17" font-size="10" font-style="italic" font-weight="bold" fill="#7a6010" font-family="Liberation Serif">f</text></svg><div class="t" style="left:635px;top:880px;font-size:14.75px;color:#000;">Список индикаторов на USDCHF,M1</div><div class="t" style="left:993px;top:879px;font-size:16px;color:#000;">?</div><svg style="position:absolute;left:1046px;top:880px" width="14" height="14"><path d="M1 1 L13 13 M13 1 L1 13" stroke="#000" stroke-width="1.1"/></svg><div style="position:absolute;left:610px;top:916px;width:363px;height:232px;background:#fff;border:1px solid #828790;"></div><div style="position:absolute;left:621px;top:925px;width:11px;height:11px;background:#fff;border:1px solid #8a8a8a;"></div><div style="position:absolute;left:623px;top:930px;width:7px;height:1px;background:#333;"></div><div style="position:absolute;left:633px;top:930px;width:9px;height:1px;background:repeating-linear-gradient(90deg,#808080 0 1px,transparent 1px 2px);"></div><svg style="position:absolute;left:642px;top:920px" width="22" height="19"><rect x="0.5" y="0.5" width="20" height="17" rx="1" fill="#eef4fc" stroke="#2a62c8"/><rect x="0.5" y="0.5" width="20" height="3" fill="#2a62c8"/><path d="M4 14 Q7 4 10 10 T17 6" stroke="#5a8ae0" stroke-width="1.6" fill="none"/></svg><div style="position:absolute;left:667px;top:918px;width:102px;height:22px;background:#3399ff;"></div><div class="t" style="left:669px;top:923px;font-size:12.9px;color:#fff;">Главный график</div><div style="position:absolute;left:652px;top:939px;width:1px;height:12px;background:repeating-linear-gradient(#808080 0 1px,transparent 1px 2px);"></div><div style="position:absolute;left:652px;top:951px;width:15px;height:1px;background:repeating-linear-gradient(90deg,#808080 0 1px,transparent 1px 2px);"></div><svg style="position:absolute;left:668px;top:941px" width="21" height="21"><rect x="0.5" y="0.5" width="17" height="17" rx="3" fill="#f2d862" stroke="#b89a30"/><text x="5" y="14" font-size="12" font-style="italic" font-weight="bold" fill="#7a6010" font-family="Liberation Serif">f</text><path d="M15 13 L19 17 L15 21 L11 17Z" fill="#f0d050" stroke="#777" stroke-width="0.7"/></svg><div class="t" style="left:695px;top:946px;font-size:12.9px;color:#000;">AbleTrend2</div><div style="position:absolute;left:982px;top:917px;width:93px;height:26px;background:#cccccc;border:1px solid #bfbfbf;"></div><div class="t" style="left:982px;top:924px;font-size:12.6px;color:#838383;width:93px;text-align:center;">Свойства</div><div style="position:absolute;left:982px;top:951px;width:93px;height:26px;background:#cccccc;border:1px solid #bfbfbf;"></div><div class="t" style="left:982px;top:958px;font-size:12.6px;color:#838383;width:93px;text-align:center;">Удалить</div><div style="position:absolute;left:982px;top:1121px;width:93px;height:26px;background:#e1e1e1;border:2px solid #0078d7;"></div><div class="t" style="left:982px;top:1129px;font-size:12.6px;color:#000;width:93px;text-align:center;">Закрыть</div>
</body></html>
